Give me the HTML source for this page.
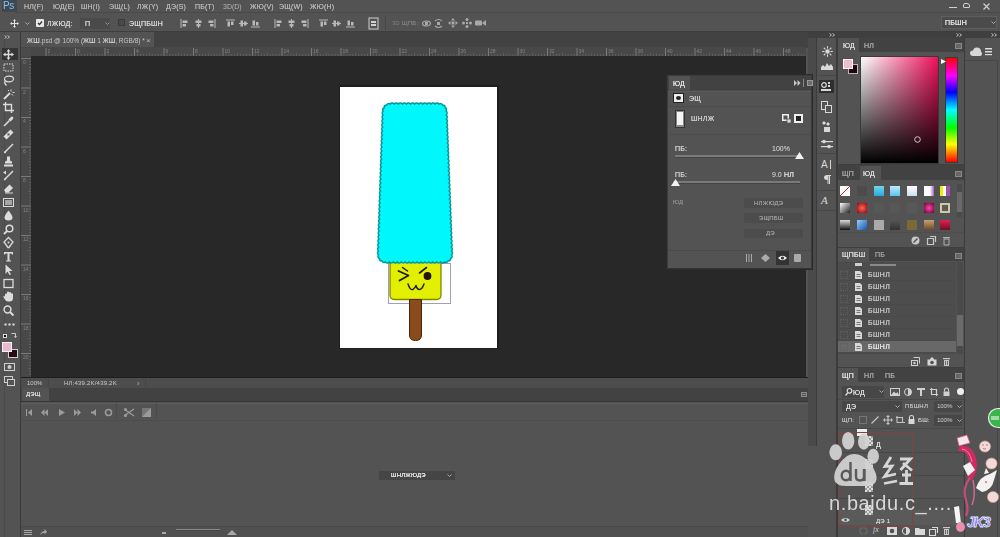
<!DOCTYPE html>
<html><head><meta charset="utf-8">
<style>
*{margin:0;padding:0;box-sizing:border-box}
html,body{width:1000px;height:537px;overflow:hidden;background:#535353;font-family:"Liberation Sans",sans-serif;font-size:8px;color:#ddd;position:relative}
.a{position:absolute}
.t{position:absolute;white-space:nowrap;line-height:1}
.z{font-weight:normal;filter:blur(0.3px);letter-spacing:0.2px;text-shadow:0 0 0.6px currentColor}
svg{position:absolute;overflow:visible}
</style></head><body>

<div class="a" style="left:0px;top:0px;width:1000px;height:13px;background:#535353;"></div>
<div class="a" style="left:0px;top:12px;width:1000px;height:1px;background:#494949;"></div>
<div class="a" style="left:2px;top:0px;width:15px;height:12px;background:#3c4854;"></div>
<div class="t" style="left:3px;top:1px;font-size:10px;color:#8cc0ea;letter-spacing:-0.3px;filter:blur(0.3px)">Ps</div>
<div class="a" style="left:0px;top:12px;width:16px;height:1px;background:#6a5038;"></div>
<div class="t z" style="left:24px;top:3px;font-size:7px;color:#b4b4b4;font-weight:normal">НЛ(F)</div>
<div class="t z" style="left:53px;top:3px;font-size:7px;color:#b4b4b4;font-weight:normal">ЮД(E)</div>
<div class="t z" style="left:81px;top:3px;font-size:7px;color:#b4b4b4;font-weight:normal">ШН(I)</div>
<div class="t z" style="left:109px;top:3px;font-size:7px;color:#b4b4b4;font-weight:normal">ЭЩ(L)</div>
<div class="t z" style="left:137px;top:3px;font-size:7px;color:#b4b4b4;font-weight:normal">ЛЖ(Y)</div>
<div class="t z" style="left:166px;top:3px;font-size:7px;color:#b4b4b4;font-weight:normal">ДЭ(S)</div>
<div class="t z" style="left:195px;top:3px;font-size:7px;color:#b4b4b4;font-weight:normal">ПБ(T)</div>
<div class="t z" style="left:250px;top:3px;font-size:7px;color:#b4b4b4;font-weight:normal">ЖЮ(V)</div>
<div class="t z" style="left:279px;top:3px;font-size:7px;color:#b4b4b4;font-weight:normal">ЭЩ(W)</div>
<div class="t z" style="left:310px;top:3px;font-size:7px;color:#b4b4b4;font-weight:normal">ЖЮ(H)</div>
<div class="t" style="left:223px;top:3px;font-size:7px;color:#b4b4b4;filter:blur(0.35px)">3D(D)</div>
<div class="a" style="left:949px;top:7px;width:8px;height:1px;background:#cfcfcf;"></div>
<div class="a" style="left:963px;top:3px;width:7px;height:5px;background:transparent;border:1px solid #cfcfcf;border-radius:2px 3px 1px 1px"></div>
<svg style="left:983px;top:3px;" width="7" height="7" viewBox="0 0 7 7"><path d="M0.5 0.5L6.5 6.5M6.5 0.5L0.5 6.5" stroke="#d0d0d0" stroke-width="1.2"/></svg>
<div class="a" style="left:0px;top:13px;width:1000px;height:19px;background:#535353;"></div>
<div class="a" style="left:0px;top:31px;width:1000px;height:1px;background:#3e3e3e;"></div>
<svg style="left:10px;top:19px;" width="9" height="9" viewBox="0 0 9 9"><path d="M4.5 0L6 2H5v2h2V3L9 4.5 7 6V5H5v2h1L4.5 9 3 7h1V5H2v1L0 4.5 2 3v1h2V2H3z" fill="#e0e0e0"/></svg>
<svg style="left:25px;top:22px;" width="5" height="3" viewBox="0 0 5 3"><path d="M0.5 0.5L2.5 2.5L4.5 0.5" fill="none" stroke="#aaa" stroke-width="1"/></svg>
<div class="a" style="left:36px;top:19px;width:8px;height:8px;background:#e8e8e8;border-radius:1px"></div>
<svg style="left:37px;top:20px;" width="6" height="6" viewBox="0 0 6 6"><path d="M1 3l1.5 1.5L5 1.5" stroke="#333" stroke-width="1.3" fill="none"/></svg>
<div class="t z" style="left:47px;top:20px;font-size:7px;color:#d6d6d6;">ЛЖЮД<span style="font-weight:normal">:</span></div>
<div class="a" style="left:80px;top:18px;width:30px;height:11px;background:#4a4a4a;"></div>
<div class="t z" style="left:85px;top:20px;font-size:7px;color:#d6d6d6;">П</div>
<svg style="left:105px;top:22px;" width="5" height="3" viewBox="0 0 5 3"><path d="M0.5 0.5L2.5 2.5L4.5 0.5" fill="none" stroke="#999" stroke-width="1"/></svg>
<div class="a" style="left:118px;top:19px;width:7px;height:7px;background:#4a4a4a;border:1px solid #3a3a3a"></div>
<div class="t z" style="left:129px;top:20px;font-size:7px;color:#d6d6d6;">ЭЩПБШН</div>
<svg style="left:180px;top:19px;" width="9" height="9" viewBox="0 0 9 9"><rect x="0.5" y="0" width="1" height="9" fill="#b8b8b8"/><rect x="2.5" y="1.5" width="5" height="2.5" fill="#b8b8b8"/><rect x="2.5" y="5" width="3.5" height="2.5" fill="#b8b8b8"/></svg>
<svg style="left:194px;top:19px;" width="9" height="9" viewBox="0 0 9 9"><rect x="4" y="0" width="1" height="9" fill="#b8b8b8"/><rect x="1.5" y="1.5" width="6" height="2.5" fill="#b8b8b8"/><rect x="2.5" y="5" width="4" height="2.5" fill="#b8b8b8"/></svg>
<svg style="left:207px;top:19px;" width="9" height="9" viewBox="0 0 9 9"><rect x="7.5" y="0" width="1" height="9" fill="#b8b8b8"/><rect x="1.5" y="1.5" width="5" height="2.5" fill="#b8b8b8"/><rect x="3" y="5" width="3.5" height="2.5" fill="#b8b8b8"/></svg>
<svg style="left:226px;top:19px;" width="9" height="9" viewBox="0 0 9 9"><rect x="0" y="0.5" width="9" height="1" fill="#b8b8b8"/><rect x="1.5" y="2.5" width="2.5" height="5" fill="#b8b8b8"/><rect x="5" y="2.5" width="2.5" height="3.5" fill="#b8b8b8"/></svg>
<svg style="left:239px;top:19px;" width="9" height="9" viewBox="0 0 9 9"><rect x="0" y="4" width="9" height="1" fill="#b8b8b8"/><rect x="1.5" y="1.5" width="2.5" height="6" fill="#b8b8b8"/><rect x="5" y="2.5" width="2.5" height="4" fill="#b8b8b8"/></svg>
<svg style="left:251px;top:19px;" width="9" height="9" viewBox="0 0 9 9"><rect x="0" y="7.5" width="9" height="1" fill="#b8b8b8"/><rect x="1.5" y="1.5" width="2.5" height="5" fill="#b8b8b8"/><rect x="5" y="3" width="2.5" height="3.5" fill="#b8b8b8"/></svg>
<svg style="left:274px;top:19px;" width="9" height="9" viewBox="0 0 9 9"><rect x="0.5" y="0" width="1" height="9" fill="#b8b8b8"/><rect x="2.5" y="1.5" width="5" height="2.5" fill="#b8b8b8"/><rect x="2.5" y="5" width="3.5" height="2.5" fill="#b8b8b8"/></svg>
<svg style="left:287px;top:19px;" width="9" height="9" viewBox="0 0 9 9"><rect x="4" y="0" width="1" height="9" fill="#b8b8b8"/><rect x="1.5" y="1.5" width="6" height="2.5" fill="#b8b8b8"/><rect x="2.5" y="5" width="4" height="2.5" fill="#b8b8b8"/></svg>
<svg style="left:300px;top:19px;" width="9" height="9" viewBox="0 0 9 9"><rect x="7.5" y="0" width="1" height="9" fill="#b8b8b8"/><rect x="1.5" y="1.5" width="5" height="2.5" fill="#b8b8b8"/><rect x="3" y="5" width="3.5" height="2.5" fill="#b8b8b8"/></svg>
<svg style="left:319px;top:19px;" width="9" height="9" viewBox="0 0 9 9"><rect x="0" y="0.5" width="9" height="1" fill="#b8b8b8"/><rect x="1.5" y="2.5" width="2.5" height="5" fill="#b8b8b8"/><rect x="5" y="2.5" width="2.5" height="3.5" fill="#b8b8b8"/></svg>
<svg style="left:332px;top:19px;" width="9" height="9" viewBox="0 0 9 9"><rect x="0" y="4" width="9" height="1" fill="#b8b8b8"/><rect x="1.5" y="1.5" width="2.5" height="6" fill="#b8b8b8"/><rect x="5" y="2.5" width="2.5" height="4" fill="#b8b8b8"/></svg>
<svg style="left:346px;top:19px;" width="9" height="9" viewBox="0 0 9 9"><rect x="0" y="7.5" width="9" height="1" fill="#b8b8b8"/><rect x="1.5" y="1.5" width="2.5" height="5" fill="#b8b8b8"/><rect x="5" y="3" width="2.5" height="3.5" fill="#b8b8b8"/></svg>
<svg style="left:369px;top:18px;" width="9" height="11" viewBox="0 0 9 11"><rect x="0" y="0" width="9" height="11" fill="none" stroke="#cfcfcf"/><rect x="2" y="3" width="5" height="2" fill="#cfcfcf"/><rect x="2" y="6" width="5" height="2" fill="#cfcfcf"/></svg>
<div class="a" style="left:385px;top:16px;width:1px;height:14px;background:#474747;"></div>
<div class="t" style="left:392px;top:20px;font-size:6px;color:#7e7e7e;filter:blur(0.3px)">3D</div>
<div class="t z" style="left:402px;top:20px;font-size:6px;color:#7e7e7e;">ЩПБ<span style="font-weight:normal">:</span></div>
<svg style="left:422px;top:19px;" width="9" height="9" viewBox="0 0 9 9"><ellipse cx="4.5" cy="4.5" rx="4" ry="2.5" fill="none" stroke="#a8a8a8" stroke-width="1.2"/><rect x="3" y="3" width="3" height="3" fill="#a8a8a8"/></svg>
<svg style="left:434px;top:19px;" width="9" height="9" viewBox="0 0 9 9"><path d="M1 2Q4.5 -1 8 2M1 7Q4.5 10 8 7" fill="none" stroke="#a8a8a8" stroke-width="1.1"/><rect x="3" y="3" width="3" height="3" fill="#a8a8a8"/></svg>
<svg style="left:448px;top:18px;" width="10" height="10" viewBox="0 0 10 10"><path d="M5 0L7 2.5H3zM5 10L7 7.5H3zM0 5L2.5 3V7zM10 5L7.5 3V7z" fill="#a8a8a8"/><rect x="3.5" y="3.5" width="3" height="3" fill="#a8a8a8"/></svg>
<svg style="left:462px;top:18px;" width="10" height="10" viewBox="0 0 10 10"><circle cx="5" cy="1.5" r="1.5" fill="#a8a8a8"/><circle cx="5" cy="8.5" r="1.5" fill="#a8a8a8"/><circle cx="1.5" cy="5" r="1.5" fill="#a8a8a8"/><circle cx="8.5" cy="5" r="1.5" fill="#a8a8a8"/><rect x="4" y="4" width="2" height="2" fill="#a8a8a8"/></svg>
<svg style="left:475px;top:19px;" width="11" height="8" viewBox="0 0 11 8"><rect x="0" y="1.5" width="7" height="5" rx="1" fill="#a8a8a8"/><path d="M7 4L11 1V7z" fill="#a8a8a8"/></svg>
<div class="a" style="left:941px;top:16px;width:56px;height:13px;background:#4b4b4b;border:1px solid #5e5e5e"></div>
<div class="t z" style="left:945px;top:19px;font-size:7px;color:#e6e6e6;">ПБШН</div>
<svg style="left:991px;top:21px;" width="5" height="3" viewBox="0 0 5 3"><path d="M0.5 0.5L2.5 2.5L4.5 0.5" fill="none" stroke="#aaa" stroke-width="1"/></svg>
<div class="a" style="left:0px;top:32px;width:20px;height:505px;background:#535353;"></div>
<div class="a" style="left:4px;top:32px;width:1px;height:505px;background:#4a4a4a;"></div>
<div class="a" style="left:20px;top:32px;width:1px;height:505px;background:#3a3a3a;"></div>
<svg style="left:4px;top:35px;" width="6" height="4" viewBox="0 0 6 4"><path d="M0.5 0.5L2.5 2L0.5 3.5M3.5 0.5L5.5 2L3.5 3.5" fill="none" stroke="#bbb" stroke-width="1"/></svg>
<div class="a" style="left:2px;top:48px;width:16px;height:12px;background:#343434;"></div>
<svg style="left:3px;top:49px;" width="11" height="11" viewBox="0 0 11 11"><path d="M5.5 0L7.5 2.5H6.2v2.3h2.3V3.5L11 5.5L8.5 7.5V6.2H6.2v2.3h1.3L5.5 11L3.5 8.5h1.3V6.2H2.5v1.3L0 5.5L2.5 3.5v1.3h2.3V2.5H3.5z" fill="#dcdcdc"/></svg>
<svg style="left:3px;top:62px;" width="11" height="11" viewBox="0 0 11 11"><rect x="1" y="2" width="9" height="7" fill="none" stroke="#dcdcdc" stroke-dasharray="1.5 1"/></svg>
<svg style="left:3px;top:75px;" width="11" height="11" viewBox="0 0 11 11"><ellipse cx="6" cy="4" rx="4.5" ry="2.8" fill="none" stroke="#dcdcdc" stroke-width="1.2"/><path d="M2 6Q1 9 3.5 10.5" fill="none" stroke="#dcdcdc" stroke-width="1.2"/></svg>
<svg style="left:3px;top:89px;" width="11" height="11" viewBox="0 0 11 11"><path d="M1 10L7 4" stroke="#dcdcdc" stroke-width="1.8"/><path d="M8 0.5V2.5M9.5 3.5H11.5M8.5 5L10 6.5M6 2L5 1" stroke="#dcdcdc" stroke-width="1"/></svg>
<svg style="left:3px;top:102px;" width="11" height="11" viewBox="0 0 11 11"><path d="M2.5 0V8.5H11M0 2.5H8.5V11" fill="none" stroke="#dcdcdc" stroke-width="1.4"/></svg>
<svg style="left:3px;top:116px;" width="11" height="11" viewBox="0 0 11 11"><path d="M1 10L6.5 4.5" stroke="#dcdcdc" stroke-width="1.6"/><path d="M5.5 3.5L7.5 1.5Q9 0 10 1Q11 2 9.5 3.5L7.5 5.5z" fill="#dcdcdc"/></svg>
<svg style="left:3px;top:129px;" width="11" height="11" viewBox="0 0 11 11"><path d="M0.5 7.5L7.5 0.5L10.5 3.5L3.5 10.5z" fill="#dcdcdc"/><rect x="4.5" y="4.5" width="2" height="2" fill="#535353"/></svg>
<svg style="left:3px;top:143px;" width="11" height="11" viewBox="0 0 11 11"><path d="M1 10.5Q0.5 8 2.5 7.5L9.5 0.5L10.5 1.5L3.5 8.5Q3 10.5 1 10.5z" fill="#dcdcdc"/></svg>
<svg style="left:3px;top:156px;" width="11" height="11" viewBox="0 0 11 11"><path d="M4 0.5H7V4Q7 5 9 5.5V7.5H2V5.5Q4 5 4 4z" fill="#dcdcdc"/><rect x="1" y="8.5" width="9" height="2" fill="#dcdcdc"/></svg>
<svg style="left:3px;top:170px;" width="11" height="11" viewBox="0 0 11 11"><path d="M1 10.5Q0.5 8 2.5 7.5L9.5 0.5L10.5 1.5L3.5 8.5Q3 10.5 1 10.5z" fill="#dcdcdc"/><path d="M0 2.5L3 0.5V4.5z" fill="#dcdcdc"/></svg>
<svg style="left:3px;top:183px;" width="11" height="11" viewBox="0 0 11 11"><path d="M1 7L6.5 1.5L10 5L5.5 9.5H2.5z" fill="#dcdcdc"/><rect x="2" y="9.5" width="8" height="1" fill="#dcdcdc"/></svg>
<svg style="left:3px;top:197px;" width="11" height="11" viewBox="0 0 11 11"><rect x="0.5" y="1.5" width="10" height="8" fill="none" stroke="#dcdcdc"/><rect x="2" y="3" width="7" height="5" fill="#dcdcdc" opacity=".6"/></svg>
<svg style="left:3px;top:210px;" width="11" height="11" viewBox="0 0 11 11"><path d="M5.5 0.5Q9.5 5.5 9.5 7.5Q9.5 10.5 5.5 10.5Q1.5 10.5 1.5 7.5Q1.5 5.5 5.5 0.5z" fill="#dcdcdc"/></svg>
<svg style="left:3px;top:224px;" width="11" height="11" viewBox="0 0 11 11"><circle cx="6.5" cy="4.5" r="3.3" fill="none" stroke="#dcdcdc" stroke-width="1.5"/><path d="M4 7L1 10" stroke="#dcdcdc" stroke-width="1.8"/></svg>
<svg style="left:3px;top:237px;" width="11" height="11" viewBox="0 0 11 11"><path d="M5.5 0.5L10 5L6 10.5H5L1 5z" fill="none" stroke="#dcdcdc" stroke-width="1.3"/><circle cx="5.5" cy="5.5" r="1" fill="#dcdcdc"/></svg>
<svg style="left:3px;top:251px;" width="11" height="11" viewBox="0 0 11 11"><path d="M1 1H10V3.5H9L8.5 2.5H6.5V9.5H8V10.5H3V9.5H4.5V2.5H2.5L2 3.5H1z" fill="#dcdcdc"/></svg>
<svg style="left:3px;top:264px;" width="11" height="11" viewBox="0 0 11 11"><path d="M2.5 0.5L9.5 7H6L8 10.5L6.5 11L4.5 7.5L2.5 10z" fill="#dcdcdc"/></svg>
<svg style="left:3px;top:278px;" width="11" height="11" viewBox="0 0 11 11"><rect x="1" y="1.5" width="9" height="8" fill="none" stroke="#dcdcdc" stroke-width="1.3"/></svg>
<svg style="left:3px;top:291px;" width="11" height="11" viewBox="0 0 11 11"><path d="M2 6V3.5Q2 2.5 3 2.5Q4 2.5 4 3.5V1.5Q4 0.5 5 0.5Q6 0.5 6 1.5V2Q6 1 7 1Q8 1 8 2V3Q8 2.2 9 2.2Q10 2.2 10 3.2V7Q10 10.5 6.5 10.5H5Q3 10.5 1.5 8L0.5 6Q0.2 5 1 4.8Q1.8 4.7 2 6z" fill="#dcdcdc"/></svg>
<svg style="left:3px;top:305px;" width="11" height="11" viewBox="0 0 11 11"><circle cx="4.5" cy="4.5" r="3.4" fill="none" stroke="#dcdcdc" stroke-width="1.5"/><path d="M7 7L10.5 10.5" stroke="#dcdcdc" stroke-width="2"/></svg>
<svg style="left:4px;top:323px;" width="11" height="3" viewBox="0 0 11 3"><circle cx="1.5" cy="1.5" r="1.2" fill="#d0d0d0"/><circle cx="5.5" cy="1.5" r="1.2" fill="#d0d0d0"/><circle cx="9.5" cy="1.5" r="1.2" fill="#d0d0d0"/></svg>
<div class="a" style="left:3px;top:334px;width:4px;height:4px;background:#111;border:1px solid #ddd"></div>
<svg style="left:11px;top:332px;" width="6" height="6" viewBox="0 0 6 6"><path d="M0.5 1.5H4.5V5.5" fill="none" stroke="#ccc" stroke-width="1"/><path d="M3 4L4.5 6L6 4z" fill="#ccc"/></svg>
<div class="a" style="left:8px;top:349px;width:10px;height:9px;background:#2a0814;border:1px solid #cfcfcf"></div>
<div class="a" style="left:2px;top:342px;width:10px;height:10px;background:#eab9cf;border:1px solid #f4f4f4"></div>
<svg style="left:4px;top:363px;" width="11" height="8" viewBox="0 0 11 8"><rect x="0.5" y="0.5" width="10" height="7" fill="none" stroke="#cfcfcf"/><circle cx="5.5" cy="4" r="2" fill="#cfcfcf"/></svg>
<svg style="left:4px;top:376px;" width="11" height="10" viewBox="0 0 11 10"><rect x="0.5" y="0.5" width="8" height="6" fill="none" stroke="#cfcfcf"/><rect x="3.5" y="3.5" width="7" height="6" fill="#535353" stroke="#cfcfcf"/></svg>
<div class="a" style="left:21px;top:32px;width:787px;height:16px;background:#424242;"></div>
<div class="a" style="left:21px;top:32px;width:133px;height:16px;background:#535353;"></div>
<div class="t" style="left:27px;top:38px;font-size:6.5px;color:#c8c8c8;filter:blur(0.3px)"><b style="letter-spacing:.3px">ЖШ</b>.psd @ 100% (<b>ЖШ</b> 1 <b>ЖШ</b>, RGB/8) *</div>
<div class="t" style="left:146px;top:37px;font-size:8px;color:#bbb;">&#x00D7;</div>
<div class="a" style="left:21px;top:47px;width:785px;height:9px;background:#484848;"></div>
<div class="a" style="left:21px;top:47px;width:10px;height:330px;background:#484848;"></div>
<div class="a" style="left:21px;top:48px;width:10px;height:8px;background:#4b4b4b;"></div>
<svg style="left:21px;top:48px;" width="787" height="8" viewBox="0 0 787 8"><rect x="24.5" y="0" width="1" height="8" fill="#7a7a7a"/><rect x="27.4" y="6" width="1" height="2" fill="#626262"/><rect x="30.4" y="6" width="1" height="2" fill="#626262"/><rect x="33.4" y="6" width="1" height="2" fill="#626262"/><rect x="36.3" y="6" width="1" height="2" fill="#626262"/><rect x="39.2" y="5" width="1" height="3" fill="#626262"/><rect x="42.2" y="6" width="1" height="2" fill="#626262"/><rect x="45.1" y="6" width="1" height="2" fill="#626262"/><rect x="48.1" y="6" width="1" height="2" fill="#626262"/><rect x="51.0" y="6" width="1" height="2" fill="#626262"/><rect x="54.0" y="0" width="1" height="8" fill="#7a7a7a"/><rect x="57.0" y="6" width="1" height="2" fill="#626262"/><rect x="59.9" y="6" width="1" height="2" fill="#626262"/><rect x="62.9" y="6" width="1" height="2" fill="#626262"/><rect x="65.8" y="6" width="1" height="2" fill="#626262"/><rect x="68.8" y="5" width="1" height="3" fill="#626262"/><rect x="71.7" y="6" width="1" height="2" fill="#626262"/><rect x="74.7" y="6" width="1" height="2" fill="#626262"/><rect x="77.6" y="6" width="1" height="2" fill="#626262"/><rect x="80.5" y="6" width="1" height="2" fill="#626262"/><rect x="83.5" y="0" width="1" height="8" fill="#7a7a7a"/><rect x="86.5" y="6" width="1" height="2" fill="#626262"/><rect x="89.4" y="6" width="1" height="2" fill="#626262"/><rect x="92.3" y="6" width="1" height="2" fill="#626262"/><rect x="95.3" y="6" width="1" height="2" fill="#626262"/><rect x="98.2" y="5" width="1" height="3" fill="#626262"/><rect x="101.2" y="6" width="1" height="2" fill="#626262"/><rect x="104.2" y="6" width="1" height="2" fill="#626262"/><rect x="107.1" y="6" width="1" height="2" fill="#626262"/><rect x="110.0" y="6" width="1" height="2" fill="#626262"/><rect x="113.0" y="0" width="1" height="8" fill="#7a7a7a"/><rect x="116.0" y="6" width="1" height="2" fill="#626262"/><rect x="118.9" y="6" width="1" height="2" fill="#626262"/><rect x="121.8" y="6" width="1" height="2" fill="#626262"/><rect x="124.8" y="6" width="1" height="2" fill="#626262"/><rect x="127.8" y="5" width="1" height="3" fill="#626262"/><rect x="130.7" y="6" width="1" height="2" fill="#626262"/><rect x="133.7" y="6" width="1" height="2" fill="#626262"/><rect x="136.6" y="6" width="1" height="2" fill="#626262"/><rect x="139.6" y="6" width="1" height="2" fill="#626262"/><rect x="142.5" y="0" width="1" height="8" fill="#7a7a7a"/><rect x="145.4" y="6" width="1" height="2" fill="#626262"/><rect x="148.4" y="6" width="1" height="2" fill="#626262"/><rect x="151.3" y="6" width="1" height="2" fill="#626262"/><rect x="154.3" y="6" width="1" height="2" fill="#626262"/><rect x="157.2" y="5" width="1" height="3" fill="#626262"/><rect x="160.2" y="6" width="1" height="2" fill="#626262"/><rect x="163.2" y="6" width="1" height="2" fill="#626262"/><rect x="166.1" y="6" width="1" height="2" fill="#626262"/><rect x="169.1" y="6" width="1" height="2" fill="#626262"/><rect x="172.0" y="0" width="1" height="8" fill="#7a7a7a"/><rect x="174.9" y="6" width="1" height="2" fill="#626262"/><rect x="177.9" y="6" width="1" height="2" fill="#626262"/><rect x="180.8" y="6" width="1" height="2" fill="#626262"/><rect x="183.8" y="6" width="1" height="2" fill="#626262"/><rect x="186.8" y="5" width="1" height="3" fill="#626262"/><rect x="189.7" y="6" width="1" height="2" fill="#626262"/><rect x="192.7" y="6" width="1" height="2" fill="#626262"/><rect x="195.6" y="6" width="1" height="2" fill="#626262"/><rect x="198.6" y="6" width="1" height="2" fill="#626262"/><rect x="201.5" y="0" width="1" height="8" fill="#7a7a7a"/><rect x="204.4" y="6" width="1" height="2" fill="#626262"/><rect x="207.4" y="6" width="1" height="2" fill="#626262"/><rect x="210.3" y="6" width="1" height="2" fill="#626262"/><rect x="213.3" y="6" width="1" height="2" fill="#626262"/><rect x="216.2" y="5" width="1" height="3" fill="#626262"/><rect x="219.2" y="6" width="1" height="2" fill="#626262"/><rect x="222.2" y="6" width="1" height="2" fill="#626262"/><rect x="225.1" y="6" width="1" height="2" fill="#626262"/><rect x="228.1" y="6" width="1" height="2" fill="#626262"/><rect x="231.0" y="0" width="1" height="8" fill="#7a7a7a"/><rect x="233.9" y="6" width="1" height="2" fill="#626262"/><rect x="236.9" y="6" width="1" height="2" fill="#626262"/><rect x="239.8" y="6" width="1" height="2" fill="#626262"/><rect x="242.8" y="6" width="1" height="2" fill="#626262"/><rect x="245.8" y="5" width="1" height="3" fill="#626262"/><rect x="248.7" y="6" width="1" height="2" fill="#626262"/><rect x="251.7" y="6" width="1" height="2" fill="#626262"/><rect x="254.6" y="6" width="1" height="2" fill="#626262"/><rect x="257.6" y="6" width="1" height="2" fill="#626262"/><rect x="260.5" y="0" width="1" height="8" fill="#7a7a7a"/><rect x="263.4" y="6" width="1" height="2" fill="#626262"/><rect x="266.4" y="6" width="1" height="2" fill="#626262"/><rect x="269.4" y="6" width="1" height="2" fill="#626262"/><rect x="272.3" y="6" width="1" height="2" fill="#626262"/><rect x="275.2" y="5" width="1" height="3" fill="#626262"/><rect x="278.2" y="6" width="1" height="2" fill="#626262"/><rect x="281.1" y="6" width="1" height="2" fill="#626262"/><rect x="284.1" y="6" width="1" height="2" fill="#626262"/><rect x="287.1" y="6" width="1" height="2" fill="#626262"/><rect x="290.0" y="0" width="1" height="8" fill="#7a7a7a"/><rect x="292.9" y="6" width="1" height="2" fill="#626262"/><rect x="295.9" y="6" width="1" height="2" fill="#626262"/><rect x="298.9" y="6" width="1" height="2" fill="#626262"/><rect x="301.8" y="6" width="1" height="2" fill="#626262"/><rect x="304.8" y="5" width="1" height="3" fill="#626262"/><rect x="307.7" y="6" width="1" height="2" fill="#626262"/><rect x="310.6" y="6" width="1" height="2" fill="#626262"/><rect x="313.6" y="6" width="1" height="2" fill="#626262"/><rect x="316.6" y="6" width="1" height="2" fill="#626262"/><rect x="319.5" y="0" width="1" height="8" fill="#7a7a7a"/><rect x="322.4" y="6" width="1" height="2" fill="#626262"/><rect x="325.4" y="6" width="1" height="2" fill="#626262"/><rect x="328.4" y="6" width="1" height="2" fill="#626262"/><rect x="331.3" y="6" width="1" height="2" fill="#626262"/><rect x="334.2" y="5" width="1" height="3" fill="#626262"/><rect x="337.2" y="6" width="1" height="2" fill="#626262"/><rect x="340.1" y="6" width="1" height="2" fill="#626262"/><rect x="343.1" y="6" width="1" height="2" fill="#626262"/><rect x="346.1" y="6" width="1" height="2" fill="#626262"/><rect x="349.0" y="0" width="1" height="8" fill="#7a7a7a"/><rect x="351.9" y="6" width="1" height="2" fill="#626262"/><rect x="354.9" y="6" width="1" height="2" fill="#626262"/><rect x="357.9" y="6" width="1" height="2" fill="#626262"/><rect x="360.8" y="6" width="1" height="2" fill="#626262"/><rect x="363.8" y="5" width="1" height="3" fill="#626262"/><rect x="366.7" y="6" width="1" height="2" fill="#626262"/><rect x="369.6" y="6" width="1" height="2" fill="#626262"/><rect x="372.6" y="6" width="1" height="2" fill="#626262"/><rect x="375.6" y="6" width="1" height="2" fill="#626262"/><rect x="378.5" y="0" width="1" height="8" fill="#7a7a7a"/><rect x="381.4" y="6" width="1" height="2" fill="#626262"/><rect x="384.4" y="6" width="1" height="2" fill="#626262"/><rect x="387.4" y="6" width="1" height="2" fill="#626262"/><rect x="390.3" y="6" width="1" height="2" fill="#626262"/><rect x="393.2" y="5" width="1" height="3" fill="#626262"/><rect x="396.2" y="6" width="1" height="2" fill="#626262"/><rect x="399.1" y="6" width="1" height="2" fill="#626262"/><rect x="402.1" y="6" width="1" height="2" fill="#626262"/><rect x="405.1" y="6" width="1" height="2" fill="#626262"/><rect x="408.0" y="0" width="1" height="8" fill="#7a7a7a"/><rect x="410.9" y="6" width="1" height="2" fill="#626262"/><rect x="413.9" y="6" width="1" height="2" fill="#626262"/><rect x="416.9" y="6" width="1" height="2" fill="#626262"/><rect x="419.8" y="6" width="1" height="2" fill="#626262"/><rect x="422.8" y="5" width="1" height="3" fill="#626262"/><rect x="425.7" y="6" width="1" height="2" fill="#626262"/><rect x="428.6" y="6" width="1" height="2" fill="#626262"/><rect x="431.6" y="6" width="1" height="2" fill="#626262"/><rect x="434.6" y="6" width="1" height="2" fill="#626262"/><rect x="437.5" y="0" width="1" height="8" fill="#7a7a7a"/><rect x="440.4" y="6" width="1" height="2" fill="#626262"/><rect x="443.4" y="6" width="1" height="2" fill="#626262"/><rect x="446.4" y="6" width="1" height="2" fill="#626262"/><rect x="449.3" y="6" width="1" height="2" fill="#626262"/><rect x="452.2" y="5" width="1" height="3" fill="#626262"/><rect x="455.2" y="6" width="1" height="2" fill="#626262"/><rect x="458.1" y="6" width="1" height="2" fill="#626262"/><rect x="461.1" y="6" width="1" height="2" fill="#626262"/><rect x="464.1" y="6" width="1" height="2" fill="#626262"/><rect x="467.0" y="0" width="1" height="8" fill="#7a7a7a"/><rect x="469.9" y="6" width="1" height="2" fill="#626262"/><rect x="472.9" y="6" width="1" height="2" fill="#626262"/><rect x="475.9" y="6" width="1" height="2" fill="#626262"/><rect x="478.8" y="6" width="1" height="2" fill="#626262"/><rect x="481.8" y="5" width="1" height="3" fill="#626262"/><rect x="484.7" y="6" width="1" height="2" fill="#626262"/><rect x="487.6" y="6" width="1" height="2" fill="#626262"/><rect x="490.6" y="6" width="1" height="2" fill="#626262"/><rect x="493.6" y="6" width="1" height="2" fill="#626262"/><rect x="496.5" y="0" width="1" height="8" fill="#7a7a7a"/><rect x="499.4" y="6" width="1" height="2" fill="#626262"/><rect x="502.4" y="6" width="1" height="2" fill="#626262"/><rect x="505.4" y="6" width="1" height="2" fill="#626262"/><rect x="508.3" y="6" width="1" height="2" fill="#626262"/><rect x="511.2" y="5" width="1" height="3" fill="#626262"/><rect x="514.2" y="6" width="1" height="2" fill="#626262"/><rect x="517.1" y="6" width="1" height="2" fill="#626262"/><rect x="520.1" y="6" width="1" height="2" fill="#626262"/><rect x="523.0" y="6" width="1" height="2" fill="#626262"/><rect x="526.0" y="0" width="1" height="8" fill="#7a7a7a"/><rect x="529.0" y="6" width="1" height="2" fill="#626262"/><rect x="531.9" y="6" width="1" height="2" fill="#626262"/><rect x="534.9" y="6" width="1" height="2" fill="#626262"/><rect x="537.8" y="6" width="1" height="2" fill="#626262"/><rect x="540.8" y="5" width="1" height="3" fill="#626262"/><rect x="543.7" y="6" width="1" height="2" fill="#626262"/><rect x="546.6" y="6" width="1" height="2" fill="#626262"/><rect x="549.6" y="6" width="1" height="2" fill="#626262"/><rect x="552.5" y="6" width="1" height="2" fill="#626262"/><rect x="555.5" y="0" width="1" height="8" fill="#7a7a7a"/><rect x="558.5" y="6" width="1" height="2" fill="#626262"/><rect x="561.4" y="6" width="1" height="2" fill="#626262"/><rect x="564.4" y="6" width="1" height="2" fill="#626262"/><rect x="567.3" y="6" width="1" height="2" fill="#626262"/><rect x="570.2" y="5" width="1" height="3" fill="#626262"/><rect x="573.2" y="6" width="1" height="2" fill="#626262"/><rect x="576.1" y="6" width="1" height="2" fill="#626262"/><rect x="579.1" y="6" width="1" height="2" fill="#626262"/><rect x="582.0" y="6" width="1" height="2" fill="#626262"/><rect x="585.0" y="0" width="1" height="8" fill="#7a7a7a"/><rect x="588.0" y="6" width="1" height="2" fill="#626262"/><rect x="590.9" y="6" width="1" height="2" fill="#626262"/><rect x="593.9" y="6" width="1" height="2" fill="#626262"/><rect x="596.8" y="6" width="1" height="2" fill="#626262"/><rect x="599.8" y="5" width="1" height="3" fill="#626262"/><rect x="602.7" y="6" width="1" height="2" fill="#626262"/><rect x="605.6" y="6" width="1" height="2" fill="#626262"/><rect x="608.6" y="6" width="1" height="2" fill="#626262"/><rect x="611.5" y="6" width="1" height="2" fill="#626262"/><rect x="614.5" y="0" width="1" height="8" fill="#7a7a7a"/><rect x="617.5" y="6" width="1" height="2" fill="#626262"/><rect x="620.4" y="6" width="1" height="2" fill="#626262"/><rect x="623.4" y="6" width="1" height="2" fill="#626262"/><rect x="626.3" y="6" width="1" height="2" fill="#626262"/><rect x="629.2" y="5" width="1" height="3" fill="#626262"/><rect x="632.2" y="6" width="1" height="2" fill="#626262"/><rect x="635.1" y="6" width="1" height="2" fill="#626262"/><rect x="638.1" y="6" width="1" height="2" fill="#626262"/><rect x="641.0" y="6" width="1" height="2" fill="#626262"/><rect x="644.0" y="0" width="1" height="8" fill="#7a7a7a"/><rect x="647.0" y="6" width="1" height="2" fill="#626262"/><rect x="649.9" y="6" width="1" height="2" fill="#626262"/><rect x="652.9" y="6" width="1" height="2" fill="#626262"/><rect x="655.8" y="6" width="1" height="2" fill="#626262"/><rect x="658.8" y="5" width="1" height="3" fill="#626262"/><rect x="661.7" y="6" width="1" height="2" fill="#626262"/><rect x="664.6" y="6" width="1" height="2" fill="#626262"/><rect x="667.6" y="6" width="1" height="2" fill="#626262"/><rect x="670.5" y="6" width="1" height="2" fill="#626262"/><rect x="673.5" y="0" width="1" height="8" fill="#7a7a7a"/><rect x="676.5" y="6" width="1" height="2" fill="#626262"/><rect x="679.4" y="6" width="1" height="2" fill="#626262"/><rect x="682.4" y="6" width="1" height="2" fill="#626262"/><rect x="685.3" y="6" width="1" height="2" fill="#626262"/><rect x="688.2" y="5" width="1" height="3" fill="#626262"/><rect x="691.2" y="6" width="1" height="2" fill="#626262"/><rect x="694.1" y="6" width="1" height="2" fill="#626262"/><rect x="697.1" y="6" width="1" height="2" fill="#626262"/><rect x="700.0" y="6" width="1" height="2" fill="#626262"/><rect x="703.0" y="0" width="1" height="8" fill="#7a7a7a"/><rect x="706.0" y="6" width="1" height="2" fill="#626262"/><rect x="708.9" y="6" width="1" height="2" fill="#626262"/><rect x="711.9" y="6" width="1" height="2" fill="#626262"/><rect x="714.8" y="6" width="1" height="2" fill="#626262"/><rect x="717.8" y="5" width="1" height="3" fill="#626262"/><rect x="720.7" y="6" width="1" height="2" fill="#626262"/><rect x="723.6" y="6" width="1" height="2" fill="#626262"/><rect x="726.6" y="6" width="1" height="2" fill="#626262"/><rect x="729.5" y="6" width="1" height="2" fill="#626262"/><rect x="732.5" y="0" width="1" height="8" fill="#7a7a7a"/><rect x="735.5" y="6" width="1" height="2" fill="#626262"/><rect x="738.4" y="6" width="1" height="2" fill="#626262"/><rect x="741.4" y="6" width="1" height="2" fill="#626262"/><rect x="744.3" y="6" width="1" height="2" fill="#626262"/><rect x="747.2" y="5" width="1" height="3" fill="#626262"/><rect x="750.2" y="6" width="1" height="2" fill="#626262"/><rect x="753.1" y="6" width="1" height="2" fill="#626262"/><rect x="756.1" y="6" width="1" height="2" fill="#626262"/><rect x="759.0" y="6" width="1" height="2" fill="#626262"/><rect x="762.0" y="0" width="1" height="8" fill="#7a7a7a"/><rect x="765.0" y="6" width="1" height="2" fill="#626262"/><rect x="767.9" y="6" width="1" height="2" fill="#626262"/><rect x="770.9" y="6" width="1" height="2" fill="#626262"/><rect x="773.8" y="6" width="1" height="2" fill="#626262"/><rect x="776.8" y="5" width="1" height="3" fill="#626262"/><rect x="779.7" y="6" width="1" height="2" fill="#626262"/><rect x="782.6" y="6" width="1" height="2" fill="#626262"/></svg>
<div class="t" style="left:47.5px;top:49px;font-size:5px;color:#858585;filter:blur(0.35px)">2</div>
<div class="t" style="left:77.0px;top:49px;font-size:5px;color:#858585;filter:blur(0.35px)">0</div>
<div class="t" style="left:106.5px;top:49px;font-size:5px;color:#858585;filter:blur(0.35px)">2</div>
<div class="t" style="left:136.0px;top:49px;font-size:5px;color:#858585;filter:blur(0.35px)">4</div>
<div class="t" style="left:165.5px;top:49px;font-size:5px;color:#858585;filter:blur(0.35px)">6</div>
<div class="t" style="left:195.0px;top:49px;font-size:5px;color:#858585;filter:blur(0.35px)">8</div>
<div class="t" style="left:224.5px;top:49px;font-size:5px;color:#858585;filter:blur(0.35px)">10</div>
<div class="t" style="left:254.0px;top:49px;font-size:5px;color:#858585;filter:blur(0.35px)">12</div>
<div class="t" style="left:283.5px;top:49px;font-size:5px;color:#858585;filter:blur(0.35px)">14</div>
<div class="t" style="left:313.0px;top:49px;font-size:5px;color:#858585;filter:blur(0.35px)">16</div>
<div class="t" style="left:342.5px;top:49px;font-size:5px;color:#858585;filter:blur(0.35px)">18</div>
<div class="t" style="left:372.0px;top:49px;font-size:5px;color:#858585;filter:blur(0.35px)">20</div>
<div class="t" style="left:401.5px;top:49px;font-size:5px;color:#858585;filter:blur(0.35px)">22</div>
<div class="t" style="left:431.0px;top:49px;font-size:5px;color:#858585;filter:blur(0.35px)">24</div>
<div class="t" style="left:460.5px;top:49px;font-size:5px;color:#858585;filter:blur(0.35px)">26</div>
<div class="t" style="left:490.0px;top:49px;font-size:5px;color:#858585;filter:blur(0.35px)">28</div>
<div class="t" style="left:519.5px;top:49px;font-size:5px;color:#858585;filter:blur(0.35px)">30</div>
<div class="t" style="left:549.0px;top:49px;font-size:5px;color:#858585;filter:blur(0.35px)">32</div>
<div class="t" style="left:578.5px;top:49px;font-size:5px;color:#858585;filter:blur(0.35px)">34</div>
<div class="t" style="left:608.0px;top:49px;font-size:5px;color:#858585;filter:blur(0.35px)">36</div>
<div class="t" style="left:637.5px;top:49px;font-size:5px;color:#858585;filter:blur(0.35px)">38</div>
<div class="t" style="left:667.0px;top:49px;font-size:5px;color:#858585;filter:blur(0.35px)">40</div>
<div class="t" style="left:696.5px;top:49px;font-size:5px;color:#858585;filter:blur(0.35px)">42</div>
<div class="t" style="left:726.0px;top:49px;font-size:5px;color:#858585;filter:blur(0.35px)">44</div>
<div class="t" style="left:755.5px;top:49px;font-size:5px;color:#858585;filter:blur(0.35px)">46</div>
<div class="t" style="left:785.0px;top:49px;font-size:5px;color:#858585;filter:blur(0.35px)">48</div>
<svg style="left:21px;top:48px;" width="10" height="330" viewBox="0 0 10 330"><rect x="0" y="10.0" width="10" height="1" fill="#7a7a7a"/><rect x="8" y="12.9" width="2" height="1" fill="#626262"/><rect x="8" y="15.9" width="2" height="1" fill="#626262"/><rect x="8" y="18.9" width="2" height="1" fill="#626262"/><rect x="8" y="21.8" width="2" height="1" fill="#626262"/><rect x="7" y="24.8" width="3" height="1" fill="#626262"/><rect x="8" y="27.7" width="2" height="1" fill="#626262"/><rect x="8" y="30.6" width="2" height="1" fill="#626262"/><rect x="8" y="33.6" width="2" height="1" fill="#626262"/><rect x="8" y="36.5" width="2" height="1" fill="#626262"/><rect x="0" y="39.5" width="10" height="1" fill="#7a7a7a"/><rect x="8" y="42.5" width="2" height="1" fill="#626262"/><rect x="8" y="45.4" width="2" height="1" fill="#626262"/><rect x="8" y="48.4" width="2" height="1" fill="#626262"/><rect x="8" y="51.3" width="2" height="1" fill="#626262"/><rect x="7" y="54.2" width="3" height="1" fill="#626262"/><rect x="8" y="57.2" width="2" height="1" fill="#626262"/><rect x="8" y="60.1" width="2" height="1" fill="#626262"/><rect x="8" y="63.1" width="2" height="1" fill="#626262"/><rect x="8" y="66.0" width="2" height="1" fill="#626262"/><rect x="0" y="69.0" width="10" height="1" fill="#7a7a7a"/><rect x="8" y="72.0" width="2" height="1" fill="#626262"/><rect x="8" y="74.9" width="2" height="1" fill="#626262"/><rect x="8" y="77.8" width="2" height="1" fill="#626262"/><rect x="8" y="80.8" width="2" height="1" fill="#626262"/><rect x="7" y="83.8" width="3" height="1" fill="#626262"/><rect x="8" y="86.7" width="2" height="1" fill="#626262"/><rect x="8" y="89.7" width="2" height="1" fill="#626262"/><rect x="8" y="92.6" width="2" height="1" fill="#626262"/><rect x="8" y="95.5" width="2" height="1" fill="#626262"/><rect x="0" y="98.5" width="10" height="1" fill="#7a7a7a"/><rect x="8" y="101.5" width="2" height="1" fill="#626262"/><rect x="8" y="104.4" width="2" height="1" fill="#626262"/><rect x="8" y="107.3" width="2" height="1" fill="#626262"/><rect x="8" y="110.3" width="2" height="1" fill="#626262"/><rect x="7" y="113.2" width="3" height="1" fill="#626262"/><rect x="8" y="116.2" width="2" height="1" fill="#626262"/><rect x="8" y="119.2" width="2" height="1" fill="#626262"/><rect x="8" y="122.1" width="2" height="1" fill="#626262"/><rect x="8" y="125.0" width="2" height="1" fill="#626262"/><rect x="0" y="128.0" width="10" height="1" fill="#7a7a7a"/><rect x="8" y="130.9" width="2" height="1" fill="#626262"/><rect x="8" y="133.9" width="2" height="1" fill="#626262"/><rect x="8" y="136.8" width="2" height="1" fill="#626262"/><rect x="8" y="139.8" width="2" height="1" fill="#626262"/><rect x="7" y="142.8" width="3" height="1" fill="#626262"/><rect x="8" y="145.7" width="2" height="1" fill="#626262"/><rect x="8" y="148.7" width="2" height="1" fill="#626262"/><rect x="8" y="151.6" width="2" height="1" fill="#626262"/><rect x="8" y="154.6" width="2" height="1" fill="#626262"/><rect x="0" y="157.5" width="10" height="1" fill="#7a7a7a"/><rect x="8" y="160.4" width="2" height="1" fill="#626262"/><rect x="8" y="163.4" width="2" height="1" fill="#626262"/><rect x="8" y="166.3" width="2" height="1" fill="#626262"/><rect x="8" y="169.3" width="2" height="1" fill="#626262"/><rect x="7" y="172.2" width="3" height="1" fill="#626262"/><rect x="8" y="175.2" width="2" height="1" fill="#626262"/><rect x="8" y="178.2" width="2" height="1" fill="#626262"/><rect x="8" y="181.1" width="2" height="1" fill="#626262"/><rect x="8" y="184.1" width="2" height="1" fill="#626262"/><rect x="0" y="187.0" width="10" height="1" fill="#7a7a7a"/><rect x="8" y="189.9" width="2" height="1" fill="#626262"/><rect x="8" y="192.9" width="2" height="1" fill="#626262"/><rect x="8" y="195.8" width="2" height="1" fill="#626262"/><rect x="8" y="198.8" width="2" height="1" fill="#626262"/><rect x="7" y="201.8" width="3" height="1" fill="#626262"/><rect x="8" y="204.7" width="2" height="1" fill="#626262"/><rect x="8" y="207.7" width="2" height="1" fill="#626262"/><rect x="8" y="210.6" width="2" height="1" fill="#626262"/><rect x="8" y="213.6" width="2" height="1" fill="#626262"/><rect x="0" y="216.5" width="10" height="1" fill="#7a7a7a"/><rect x="8" y="219.4" width="2" height="1" fill="#626262"/><rect x="8" y="222.4" width="2" height="1" fill="#626262"/><rect x="8" y="225.3" width="2" height="1" fill="#626262"/><rect x="8" y="228.3" width="2" height="1" fill="#626262"/><rect x="7" y="231.2" width="3" height="1" fill="#626262"/><rect x="8" y="234.2" width="2" height="1" fill="#626262"/><rect x="8" y="237.2" width="2" height="1" fill="#626262"/><rect x="8" y="240.1" width="2" height="1" fill="#626262"/><rect x="8" y="243.1" width="2" height="1" fill="#626262"/><rect x="0" y="246.0" width="10" height="1" fill="#7a7a7a"/><rect x="8" y="248.9" width="2" height="1" fill="#626262"/><rect x="8" y="251.9" width="2" height="1" fill="#626262"/><rect x="8" y="254.8" width="2" height="1" fill="#626262"/><rect x="8" y="257.8" width="2" height="1" fill="#626262"/><rect x="7" y="260.8" width="3" height="1" fill="#626262"/><rect x="8" y="263.7" width="2" height="1" fill="#626262"/><rect x="8" y="266.6" width="2" height="1" fill="#626262"/><rect x="8" y="269.6" width="2" height="1" fill="#626262"/><rect x="8" y="272.6" width="2" height="1" fill="#626262"/><rect x="0" y="275.5" width="10" height="1" fill="#7a7a7a"/><rect x="8" y="278.4" width="2" height="1" fill="#626262"/><rect x="8" y="281.4" width="2" height="1" fill="#626262"/><rect x="8" y="284.4" width="2" height="1" fill="#626262"/><rect x="8" y="287.3" width="2" height="1" fill="#626262"/><rect x="7" y="290.2" width="3" height="1" fill="#626262"/><rect x="8" y="293.2" width="2" height="1" fill="#626262"/><rect x="8" y="296.1" width="2" height="1" fill="#626262"/><rect x="8" y="299.1" width="2" height="1" fill="#626262"/><rect x="8" y="302.1" width="2" height="1" fill="#626262"/><rect x="0" y="305.0" width="10" height="1" fill="#7a7a7a"/><rect x="8" y="307.9" width="2" height="1" fill="#626262"/><rect x="8" y="310.9" width="2" height="1" fill="#626262"/><rect x="8" y="313.9" width="2" height="1" fill="#626262"/><rect x="8" y="316.8" width="2" height="1" fill="#626262"/><rect x="7" y="319.8" width="3" height="1" fill="#626262"/><rect x="8" y="322.7" width="2" height="1" fill="#626262"/><rect x="8" y="325.6" width="2" height="1" fill="#626262"/></svg>
<div class="t" style="left:23px;top:60.0px;font-size:5px;color:#858585;filter:blur(0.35px)">0</div>
<div class="t" style="left:23px;top:89.5px;font-size:5px;color:#858585;filter:blur(0.35px)">2</div>
<div class="t" style="left:23px;top:119.0px;font-size:5px;color:#858585;filter:blur(0.35px)">4</div>
<div class="t" style="left:23px;top:148.5px;font-size:5px;color:#858585;filter:blur(0.35px)">6</div>
<div class="t" style="left:23px;top:178.0px;font-size:5px;color:#858585;filter:blur(0.35px)">8</div>
<div class="t" style="left:23px;top:207.5px;font-size:5px;color:#858585;filter:blur(0.35px)">10</div>
<div class="t" style="left:23px;top:237.0px;font-size:5px;color:#858585;filter:blur(0.35px)">12</div>
<div class="t" style="left:23px;top:266.5px;font-size:5px;color:#858585;filter:blur(0.35px)">14</div>
<div class="t" style="left:23px;top:296.0px;font-size:5px;color:#858585;filter:blur(0.35px)">16</div>
<div class="t" style="left:23px;top:325.5px;font-size:5px;color:#858585;filter:blur(0.35px)">18</div>
<div class="t" style="left:23px;top:355.0px;font-size:5px;color:#858585;filter:blur(0.35px)">20</div>
<div class="a" style="left:31px;top:56px;width:775px;height:321px;background:#282828;"></div>
<div class="a" style="left:339px;top:85px;width:160px;height:264px;background:#1e1e1e;"></div>
<div class="a" style="left:340px;top:87px;width:157px;height:261px;background:#ffffff;"></div>
<div class="a" style="left:388px;top:263px;width:63px;height:41px;background:transparent;border:1px solid #a49cb8"></div>
<svg style="left:0;top:0" width="1000" height="537" viewBox="0 0 1000 537"><path d="M390 258 H441 V295 Q441 299.5 436.5 299.5 H394.5 Q390 299.5 390 295Z" fill="#e2f000" stroke="#7f8a00" stroke-width="1.3"/><path d="M409.5 299.5 V335 Q409.5 340.5 415.5 340.5 Q421.5 340.5 421.5 335 V299.5Z" fill="#8b4a1c" stroke="#4a2608" stroke-width="1"/><path d="M398.5 271 L408.5 275.5 L399.5 280.5" fill="none" stroke="#1a1a1a" stroke-width="1.8" stroke-linecap="round" stroke-linejoin="round"/><path d="M402.5 267.5 L407.5 271" fill="none" stroke="#1a1a1a" stroke-width="1.5" stroke-linecap="round"/><path d="M419.5 273 L426.5 267.5" fill="none" stroke="#1a1a1a" stroke-width="1.6" stroke-linecap="round"/><circle cx="427.5" cy="276" r="3.9" fill="#241204"/><path d="M408 284 Q410 290.5 413 289.5 Q415 288 416 285.5 Q417 289.5 419.5 289.5 Q422 289.5 424 284" fill="none" stroke="#1a1a1a" stroke-width="1.4" stroke-linecap="round" stroke-linejoin="round"/></svg>
<svg style="left:0;top:0" width="1000" height="537" viewBox="0 0 1000 537"><path d="M383.20 111.00 A2.60 2.60 0 0 1 384.14 107.50 A2.60 2.60 0 0 1 386.70 104.94 A2.60 2.60 0 0 1 390.20 104.00 A2.60 2.60 0 0 1 394.27 104.00 A2.60 2.60 0 0 1 398.35 104.00 A2.60 2.60 0 0 1 402.43 104.00 A2.60 2.60 0 0 1 406.50 104.00 A2.60 2.60 0 0 1 410.57 104.00 A2.60 2.60 0 0 1 414.65 104.00 A2.60 2.60 0 0 1 418.73 104.00 A2.60 2.60 0 0 1 422.80 104.00 A2.60 2.60 0 0 1 426.88 104.00 A2.60 2.60 0 0 1 430.95 104.00 A2.60 2.60 0 0 1 435.03 104.00 A2.60 2.60 0 0 1 439.10 104.00 A2.60 2.60 0 0 1 442.60 104.94 A2.60 2.60 0 0 1 445.16 107.50 A2.60 2.60 0 0 1 446.10 111.00 A2.60 2.60 0 0 1 446.25 115.00 A2.60 2.60 0 0 1 446.41 119.00 A2.60 2.60 0 0 1 446.56 123.00 A2.60 2.60 0 0 1 446.71 127.00 A2.60 2.60 0 0 1 446.86 131.00 A2.60 2.60 0 0 1 447.02 135.00 A2.60 2.60 0 0 1 447.17 139.00 A2.60 2.60 0 0 1 447.32 143.00 A2.60 2.60 0 0 1 447.48 147.00 A2.60 2.60 0 0 1 447.63 151.00 A2.60 2.60 0 0 1 447.78 155.00 A2.60 2.60 0 0 1 447.93 159.00 A2.60 2.60 0 0 1 448.09 163.00 A2.60 2.60 0 0 1 448.24 167.00 A2.60 2.60 0 0 1 448.39 171.00 A2.60 2.60 0 0 1 448.54 175.00 A2.60 2.60 0 0 1 448.70 179.00 A2.60 2.60 0 0 1 448.85 183.00 A2.60 2.60 0 0 1 449.00 187.00 A2.60 2.60 0 0 1 449.16 191.00 A2.60 2.60 0 0 1 449.31 195.00 A2.60 2.60 0 0 1 449.46 199.00 A2.60 2.60 0 0 1 449.61 203.00 A2.60 2.60 0 0 1 449.77 207.00 A2.60 2.60 0 0 1 449.92 211.00 A2.60 2.60 0 0 1 450.07 215.00 A2.60 2.60 0 0 1 450.23 219.00 A2.60 2.60 0 0 1 450.38 223.00 A2.60 2.60 0 0 1 450.53 227.00 A2.60 2.60 0 0 1 450.68 231.00 A2.60 2.60 0 0 1 450.84 235.00 A2.60 2.60 0 0 1 450.99 239.00 A2.60 2.60 0 0 1 451.14 243.00 A2.60 2.60 0 0 1 451.29 247.00 A2.60 2.60 0 0 1 451.45 251.00 A2.60 2.60 0 0 1 451.60 255.00 A2.60 2.60 0 0 1 450.66 258.50 A2.60 2.60 0 0 1 448.10 261.06 A2.60 2.60 0 0 1 444.60 262.00 A2.60 2.60 0 0 1 440.65 262.00 A2.60 2.60 0 0 1 436.71 262.00 A2.60 2.60 0 0 1 432.76 262.00 A2.60 2.60 0 0 1 428.81 262.00 A2.60 2.60 0 0 1 424.87 262.00 A2.60 2.60 0 0 1 420.92 262.00 A2.60 2.60 0 0 1 416.97 262.00 A2.60 2.60 0 0 1 413.03 262.00 A2.60 2.60 0 0 1 409.08 262.00 A2.60 2.60 0 0 1 405.13 262.00 A2.60 2.60 0 0 1 401.19 262.00 A2.60 2.60 0 0 1 397.24 262.00 A2.60 2.60 0 0 1 393.29 262.00 A2.60 2.60 0 0 1 389.35 262.00 A2.60 2.60 0 0 1 385.40 262.00 A2.60 2.60 0 0 1 381.90 261.06 A2.60 2.60 0 0 1 379.34 258.50 A2.60 2.60 0 0 1 378.40 255.00 A2.60 2.60 0 0 1 378.53 251.00 A2.60 2.60 0 0 1 378.67 247.00 A2.60 2.60 0 0 1 378.80 243.00 A2.60 2.60 0 0 1 378.93 239.00 A2.60 2.60 0 0 1 379.07 235.00 A2.60 2.60 0 0 1 379.20 231.00 A2.60 2.60 0 0 1 379.33 227.00 A2.60 2.60 0 0 1 379.47 223.00 A2.60 2.60 0 0 1 379.60 219.00 A2.60 2.60 0 0 1 379.73 215.00 A2.60 2.60 0 0 1 379.87 211.00 A2.60 2.60 0 0 1 380.00 207.00 A2.60 2.60 0 0 1 380.13 203.00 A2.60 2.60 0 0 1 380.27 199.00 A2.60 2.60 0 0 1 380.40 195.00 A2.60 2.60 0 0 1 380.53 191.00 A2.60 2.60 0 0 1 380.67 187.00 A2.60 2.60 0 0 1 380.80 183.00 A2.60 2.60 0 0 1 380.93 179.00 A2.60 2.60 0 0 1 381.07 175.00 A2.60 2.60 0 0 1 381.20 171.00 A2.60 2.60 0 0 1 381.33 167.00 A2.60 2.60 0 0 1 381.47 163.00 A2.60 2.60 0 0 1 381.60 159.00 A2.60 2.60 0 0 1 381.73 155.00 A2.60 2.60 0 0 1 381.87 151.00 A2.60 2.60 0 0 1 382.00 147.00 A2.60 2.60 0 0 1 382.13 143.00 A2.60 2.60 0 0 1 382.27 139.00 A2.60 2.60 0 0 1 382.40 135.00 A2.60 2.60 0 0 1 382.53 131.00 A2.60 2.60 0 0 1 382.67 127.00 A2.60 2.60 0 0 1 382.80 123.00 A2.60 2.60 0 0 1 382.93 119.00 A2.60 2.60 0 0 1 383.07 115.00 A2.60 2.60 0 0 1 383.20 111.00Z" fill="#00f8fc" stroke="#0a9696" stroke-width="1.5"/></svg>
<div class="a" style="left:21px;top:377px;width:787px;height:11px;background:#4d4d4d;"></div>
<div class="a" style="left:21px;top:377px;width:787px;height:1px;background:#1e1e1e;"></div>
<div class="t" style="left:27px;top:380px;font-size:6px;color:#cfcfcf;filter:blur(0.2px)">100%</div>
<div class="a" style="left:48px;top:378px;width:1px;height:9px;background:#464646;"></div>
<div class="t z" style="left:64px;top:380px;font-size:6px;color:#a8a8a8;">НЛ<span style="font-weight:normal">:439.2K/439.2K</span></div>
<div class="t" style="left:137px;top:380px;font-size:7px;color:#bbb;">&#x203A;</div>
<div class="a" style="left:145px;top:378px;width:1px;height:9px;background:#464646;"></div>
<div class="a" style="left:21px;top:388px;width:787px;height:13px;background:#424242;"></div>
<div class="a" style="left:22px;top:388px;width:27px;height:13px;background:#535353;"></div>
<div class="t z" style="left:26px;top:391px;font-size:6px;color:#dcdcdc;">ДЭЩ</div>
<div class="a" style="left:21px;top:401px;width:787px;height:1px;background:#353535;"></div>
<div class="a" style="left:21px;top:403px;width:787px;height:1px;background:#5e5e5e;"></div>
<svg style="left:801px;top:392px;" width="6" height="5" viewBox="0 0 6 5"><rect x="0" y="0" width="6" height="5" fill="#8a8a8a"/><rect x="1" y="1.3" width="4" height=".8" fill="#444"/><rect x="1" y="3" width="4" height=".8" fill="#444"/></svg>
<div class="a" style="left:21px;top:402px;width:787px;height:19px;background:#535353;"></div>
<div class="a" style="left:21px;top:401px;width:787px;height:1px;background:#353535;"></div>
<div class="a" style="left:21px;top:403px;width:787px;height:1px;background:#5e5e5e;"></div>
<div class="a" style="left:21px;top:420px;width:787px;height:1px;background:#4e4e4e;"></div>
<svg style="left:26px;top:409px;" width="8" height="8" viewBox="0 0 8 8"><rect x="0" y="0" width="1" height="7" fill="#9c9c9c"/><path d="M6 0L2 3.5L6 7z" fill="#9c9c9c"/></svg>
<svg style="left:41px;top:409px;" width="8" height="8" viewBox="0 0 8 8"><path d="M7 0L3.5 3.5L7 7z M3.5 0L0 3.5L3.5 7z" fill="#9c9c9c"/></svg>
<svg style="left:58px;top:409px;" width="8" height="8" viewBox="0 0 8 8"><path d="M1 0L7 3.5L1 7z" fill="#9c9c9c"/></svg>
<svg style="left:74px;top:409px;" width="8" height="8" viewBox="0 0 8 8"><path d="M0 0L3.5 3.5L0 7z M3.5 0L7 3.5L3.5 7z" fill="#9c9c9c"/></svg>
<svg style="left:90px;top:409px;" width="8" height="8" viewBox="0 0 8 8"><path d="M1 2.5H3L6 0V7L3 4.5H1z" fill="#9c9c9c"/></svg>
<svg style="left:104px;top:408px;" width="9" height="9" viewBox="0 0 9 9"><circle cx="4.5" cy="4.5" r="3" fill="none" stroke="#9c9c9c" stroke-width="1.5"/></svg>
<div class="a" style="left:116px;top:403px;width:1px;height:16px;background:#4a4a4a;"></div>
<svg style="left:124px;top:408px;" width="10" height="9" viewBox="0 0 10 9"><path d="M0 1L10 8M0 8L10 1" stroke="#9c9c9c" stroke-width="1.2"/><circle cx="1.5" cy="1.5" r="1.5" fill="#9c9c9c"/><circle cx="1.5" cy="7.5" r="1.5" fill="#9c9c9c"/></svg>
<svg style="left:142px;top:408px;" width="9" height="9" viewBox="0 0 9 9"><rect x="0" y="0" width="9" height="9" fill="#777"/><path d="M0 9L9 0V9z" fill="#9c9c9c"/></svg>
<div class="a" style="left:156px;top:403px;width:1px;height:16px;background:#4a4a4a;"></div>
<div class="a" style="left:21px;top:421px;width:787px;height:104px;background:#535353;"></div>
<div class="a" style="left:21px;top:526px;width:787px;height:1px;background:#484848;"></div>
<div class="a" style="left:21px;top:527px;width:787px;height:10px;background:#505050;"></div>
<div class="a" style="left:379px;top:471px;width:76px;height:9px;background:#454545;"></div>
<div class="t z" style="left:391px;top:472px;font-size:6px;color:#ececec;">ШНЛЖЮДЭ</div>
<svg style="left:447px;top:474px;" width="5" height="3" viewBox="0 0 5 3"><path d="M0.5 0.5L2.5 2.5L4.5 0.5" fill="none" stroke="#aaa" stroke-width="1"/></svg>
<svg style="left:24px;top:530px;" width="8" height="5" viewBox="0 0 8 5"><rect x="0" y="0" width="8" height="1" fill="#a8a8a8"/><rect x="0" y="2" width="8" height="1" fill="#a8a8a8"/><rect x="0" y="4" width="8" height="1" fill="#a8a8a8"/></svg>
<svg style="left:40px;top:529px;" width="7" height="6" viewBox="0 0 7 6"><path d="M0 6 Q1 2.5 4.5 2 L4.5 0 L7 2.8 L4.5 5.5 L4.5 3.8 Q2 3.8 0 6z" fill="#a8a8a8"/></svg>
<svg style="left:162px;top:532px;" width="4" height="2" viewBox="0 0 4 2"><rect x="0" y="0" width="4" height="2" fill="#a8a8a8"/></svg>
<div class="a" style="left:176px;top:529px;width:44px;height:1px;background:#8a8a8a;"></div>
<div class="a" style="left:176px;top:530px;width:44px;height:1px;background:#444;"></div>
<svg style="left:227px;top:530px;" width="10" height="5" viewBox="0 0 10 5"><path d="M0 5L5 0L10 5z" fill="#a8a8a8"/></svg>
<div class="a" style="left:808px;top:32px;width:192px;height:505px;background:#535353;"></div>
<div class="a" style="left:808px;top:32px;width:192px;height:6px;background:#3f3f3f;"></div>
<svg style="left:829px;top:33px;" width="6" height="4" viewBox="0 0 6 4"><path d="M0.5 0.5L2.5 2L0.5 3.5M3.5 0.5L5.5 2L3.5 3.5" fill="none" stroke="#bbb" stroke-width="1"/></svg>
<svg style="left:956px;top:33px;" width="6" height="4" viewBox="0 0 6 4"><path d="M0.5 0.5L2.5 2L0.5 3.5M3.5 0.5L5.5 2L3.5 3.5" fill="none" stroke="#bbb" stroke-width="1"/></svg>
<svg style="left:991px;top:33px;" width="6" height="4" viewBox="0 0 6 4"><path d="M0.5 0.5L2.5 2L0.5 3.5M3.5 0.5L5.5 2L3.5 3.5" fill="none" stroke="#bbb" stroke-width="1"/></svg>
<div class="a" style="left:808px;top:38px;width:8px;height:408px;background:#4a4a4a;"></div>
<div class="a" style="left:816px;top:38px;width:1px;height:408px;background:#3c3c3c;"></div>
<div class="a" style="left:817px;top:38px;width:19px;height:499px;background:#535353;"></div>
<div class="a" style="left:836px;top:38px;width:2px;height:499px;background:#3c3c3c;"></div>
<div class="a" style="left:964px;top:38px;width:1px;height:499px;background:#3c3c3c;"></div>
<div class="a" style="left:965px;top:38px;width:35px;height:499px;background:#535353;"></div>
<div class="a" style="left:997px;top:38px;width:1px;height:499px;background:#464646;"></div>
<svg style="left:822px;top:46px;" width="11" height="11" viewBox="0 0 11 11"><circle cx="5.5" cy="5.5" r="2.2" fill="#d8d8d8"/><line x1="8.5" y1="5.5" x2="10.8" y2="5.5" stroke="#d8d8d8" stroke-width="1.1"/><line x1="7.621320343559643" y1="7.621320343559642" x2="9.247665940288702" y2="9.247665940288702" stroke="#d8d8d8" stroke-width="1.1"/><line x1="5.5" y1="8.5" x2="5.5" y2="10.8" stroke="#d8d8d8" stroke-width="1.1"/><line x1="3.3786796564403576" y1="7.621320343559643" x2="1.7523340597112984" y2="9.247665940288702" stroke="#d8d8d8" stroke-width="1.1"/><line x1="2.5" y1="5.5" x2="0.20000000000000018" y2="5.500000000000001" stroke="#d8d8d8" stroke-width="1.1"/><line x1="3.378679656440357" y1="3.3786796564403576" x2="1.7523340597112975" y2="1.7523340597112984" stroke="#d8d8d8" stroke-width="1.1"/><line x1="5.499999999999999" y1="2.5" x2="5.499999999999999" y2="0.20000000000000018" stroke="#d8d8d8" stroke-width="1.1"/><line x1="7.621320343559642" y1="3.378679656440357" x2="9.247665940288702" y2="1.7523340597112975" stroke="#d8d8d8" stroke-width="1.1"/></svg>
<svg style="left:821px;top:62px;" width="12" height="8" viewBox="0 0 12 8"><path d="M0 8V5L2 3L4 5L6 1L8 4L10 2L12 5V8z" fill="#d8d8d8"/></svg>
<div class="a" style="left:817px;top:75px;width:19px;height:1px;background:#474747;"></div>
<div class="a" style="left:819px;top:80px;width:15px;height:13px;background:#2f2f2f;"></div>
<svg style="left:821px;top:82px;" width="10" height="10" viewBox="0 0 10 10"><circle cx="3" cy="3" r="2.3" fill="none" stroke="#d8d8d8" stroke-width="1.2"/><rect x="7" y="0" width="2" height="2" fill="#d8d8d8"/><rect x="7" y="3" width="2" height="2" fill="#d8d8d8"/><rect x="0" y="7" width="10" height="2" fill="#d8d8d8"/></svg>
<svg style="left:821px;top:101px;" width="11" height="12" viewBox="0 0 11 12"><rect x="0.5" y="0.5" width="6" height="8" fill="none" stroke="#d8d8d8"/><rect x="4.5" y="4.5" width="6" height="7" fill="#535353" stroke="#d8d8d8"/></svg>
<svg style="left:822px;top:121px;" width="10" height="11" viewBox="0 0 10 11"><path d="M2 0L4 2L2 4L0 2z M6 1L8 3L6 5L4 3z" fill="#d8d8d8"/><rect x="2" y="6" width="6" height="5" fill="#d8d8d8"/></svg>
<svg style="left:821px;top:140px;" width="12" height="8" viewBox="0 0 12 8"><rect x="0" y="1" width="12" height="1.2" fill="#d8d8d8"/><rect x="0" y="6" width="12" height="1.2" fill="#d8d8d8"/><circle cx="3" cy="1.6" r="1.8" fill="#d8d8d8"/><circle cx="8" cy="6.6" r="1.8" fill="#d8d8d8"/></svg>
<div class="a" style="left:817px;top:153px;width:19px;height:1px;background:#474747;"></div>
<div class="t" style="left:821px;top:160px;font-size:10px;color:#d8d8d8;">A</div>
<div class="a" style="left:830px;top:160px;width:1px;height:9px;background:#d8d8d8;"></div>
<svg style="left:824px;top:175px;" width="7" height="9" viewBox="0 0 7 9"><path d="M3 0H7V1H6V9H5V1H4.5V9H3.5V5Q0 5 0 2.5Q0 0 3 0z" fill="#d8d8d8"/></svg>
<div class="a" style="left:817px;top:190px;width:19px;height:1px;background:#474747;"></div>
<div class="t" style="left:821px;top:195px;font-size:11px;color:#d8d8d8;font-family:Liberation Serif;font-style:italic">A</div>
<div class="a" style="left:817px;top:210px;width:19px;height:1px;background:#474747;"></div>
<div class="a" style="left:838px;top:38px;width:126px;height:14px;background:#424242;"></div>
<div class="a" style="left:838px;top:38px;width:21px;height:14px;background:#535353;"></div>
<div class="t z" style="left:843px;top:42px;font-size:7px;color:#e0e0e0;">ЮД</div>
<div class="t z" style="left:864px;top:42px;font-size:7px;color:#aaaaaa;">НЛ</div>
<svg style="left:955px;top:43px;" width="7" height="6" viewBox="0 0 7 6"><rect x="0" y="0" width="7" height="6" fill="#888"/><rect x="1" y="1.5" width="5" height="1" fill="#444"/><rect x="1" y="3.5" width="5" height="1" fill="#444"/></svg>
<div class="a" style="left:838px;top:52px;width:126px;height:112px;background:#535353;"></div>
<div class="a" style="left:861px;top:57px;width:77px;height:106px;background:linear-gradient(to top,#000,rgba(0,0,0,0)),linear-gradient(to right,#fff,#f0105c)"></div>
<div class="a" style="left:860px;top:56px;width:79px;height:108px;background:transparent;border:1px solid #3a3a3a"></div>
<div class="a" style="left:945px;top:57px;width:13px;height:106px;background:linear-gradient(to bottom,#ff0000 0%,#ff00ff 17%,#0000ff 33%,#00ffff 50%,#00ff00 67%,#ffff00 83%,#ff0000 100%);border:1px solid #3a3a3a"></div>
<svg style="left:941px;top:59px;" width="5" height="5" viewBox="0 0 5 5"><path d="M0 0L5 2.5L0 5z" fill="#fff"/></svg>
<svg style="left:914px;top:136px;" width="7" height="7" viewBox="0 0 7 7"><circle cx="3.5" cy="3.5" r="2.8" fill="none" stroke="#c8c8c8" stroke-width="1"/></svg>
<div class="a" style="left:848px;top:64px;width:10px;height:10px;background:#1f0611;border:1px solid #b8b8b8"></div>
<div class="a" style="left:843px;top:59px;width:10px;height:10px;background:#efbdd0;border:1px solid #f8f8f8"></div>
<div class="a" style="left:838px;top:164px;width:126px;height:1px;background:#3f3f3f;"></div>
<div class="a" style="left:838px;top:165px;width:126px;height:15px;background:#424242;"></div>
<div class="a" style="left:860px;top:166px;width:21px;height:14px;background:#535353;"></div>
<div class="t z" style="left:842px;top:170px;font-size:7px;color:#a8a8a8;">ЩП</div>
<div class="t z" style="left:863px;top:170px;font-size:7px;color:#e0e0e0;">ЮД</div>
<svg style="left:955px;top:171px;" width="7" height="6" viewBox="0 0 7 6"><rect x="0" y="0" width="7" height="6" fill="#888"/><rect x="1" y="1.5" width="5" height="1" fill="#444"/><rect x="1" y="3.5" width="5" height="1" fill="#444"/></svg>
<div class="a" style="left:838px;top:180px;width:126px;height:67px;background:#535353;"></div>
<div class="a" style="left:840px;top:186px;width:10px;height:10px;background:linear-gradient(135deg,#fff 45%,#d22 46%,#d22 54%,#fff 55%);"></div>
<div class="a" style="left:857px;top:186px;width:10px;height:10px;background:#4c4c4c;"></div>
<div class="a" style="left:874px;top:186px;width:10px;height:10px;background:linear-gradient(#6fd6ee,#2aa8d8);"></div>
<div class="a" style="left:890px;top:186px;width:10px;height:10px;background:linear-gradient(#bfeaff,#59c2ee);"></div>
<div class="a" style="left:907px;top:186px;width:10px;height:10px;background:linear-gradient(#fff,#cde);"></div>
<div class="a" style="left:924px;top:186px;width:10px;height:10px;background:linear-gradient(90deg,#fff 60%,#a060c0);"></div>
<div class="a" style="left:940px;top:186px;width:10px;height:10px;background:linear-gradient(90deg,#ee0 30%,#fff 30%,#fff 60%,#a050b0 60%);"></div>
<div class="a" style="left:840px;top:203px;width:10px;height:10px;background:linear-gradient(135deg,#fff,#222);"></div>
<div class="a" style="left:857px;top:203px;width:10px;height:10px;background:radial-gradient(#f66,#900);"></div>
<div class="a" style="left:874px;top:203px;width:10px;height:10px;background:#575757;"></div>
<div class="a" style="left:890px;top:203px;width:10px;height:10px;background:#575757;"></div>
<div class="a" style="left:907px;top:203px;width:10px;height:10px;background:#585858;"></div>
<div class="a" style="left:924px;top:203px;width:10px;height:10px;background:radial-gradient(#f4a,#603);"></div>
<div class="a" style="left:940px;top:203px;width:10px;height:10px;background:#5c5c50;"></div>
<div class="a" style="left:840px;top:220px;width:10px;height:10px;background:linear-gradient(#ddd,#111);"></div>
<div class="a" style="left:857px;top:220px;width:10px;height:10px;background:linear-gradient(135deg,#9cf,#15a);"></div>
<div class="a" style="left:874px;top:220px;width:10px;height:10px;background:#aaa;"></div>
<div class="a" style="left:890px;top:220px;width:10px;height:10px;background:linear-gradient(#555,#333);"></div>
<div class="a" style="left:907px;top:220px;width:10px;height:10px;background:#7a6a3a;"></div>
<div class="a" style="left:924px;top:220px;width:10px;height:10px;background:linear-gradient(#c9a070,#6a4a2a);"></div>
<div class="a" style="left:940px;top:220px;width:10px;height:10px;background:linear-gradient(#e02050,#701020);"></div>
<div class="a" style="left:884px;top:213px;width:8px;height:8px;background:transparent;"></div>
<div class="a" style="left:940px;top:203px;width:10px;height:10px;background:transparent;border:2px solid #cfc8a8;background:#5c5c50"></div>
<div class="a" style="left:957px;top:184px;width:5px;height:33px;background:#4a4a4a;"></div>
<div class="a" style="left:957px;top:192px;width:5px;height:20px;background:#6a6a6a;"></div>
<div class="a" style="left:838px;top:232px;width:126px;height:1px;background:#4d4d4d;"></div>
<svg style="left:911px;top:236px;" width="9" height="9" viewBox="0 0 9 9"><circle cx="4.5" cy="4.5" r="4" fill="#c8c8c8"/><path d="M2.5 6.5L6.5 2.5" stroke="#535353" stroke-width="1.4"/></svg>
<svg style="left:927px;top:236px;" width="9" height="9" viewBox="0 0 9 9"><path d="M0.5 2.5H6.5V8.5H0.5z" fill="none" stroke="#c8c8c8" stroke-width="1.2"/><path d="M3 0.5H8.5V6" fill="none" stroke="#c8c8c8" stroke-width="1.2"/></svg>
<svg style="left:943px;top:236px;" width="7" height="9" viewBox="0 0 7 9"><rect x="0" y="1" width="7" height="1.2" fill="#b0b0b0"/><path d="M1 3H6V9H1z" fill="none" stroke="#b0b0b0"/></svg>
<div class="a" style="left:838px;top:247px;width:126px;height:1px;background:#3f3f3f;"></div>
<div class="a" style="left:838px;top:248px;width:126px;height:13px;background:#424242;"></div>
<div class="a" style="left:838px;top:248px;width:31px;height:13px;background:#535353;"></div>
<div class="t z" style="left:842px;top:251px;font-size:7px;color:#e0e0e0;">ЩПБШ</div>
<div class="t z" style="left:875px;top:251px;font-size:7px;color:#a0a0a0;">ПБ</div>
<svg style="left:955px;top:253px;" width="7" height="6" viewBox="0 0 7 6"><rect x="0" y="0" width="7" height="6" fill="#888"/><rect x="1" y="1.5" width="5" height="1" fill="#444"/><rect x="1" y="3.5" width="5" height="1" fill="#444"/></svg>
<div class="a" style="left:838px;top:261px;width:126px;height:94px;background:#535353;"></div>
<div class="a" style="left:838px;top:262px;width:118px;height:92px;background:#4a4a4a;"></div>
<div class="a" style="left:838px;top:263px;width:118px;height:5px;background:#4d4d4d;"></div>
<div class="a" style="left:838px;top:269px;width:118px;height:11px;background:#4d4d4d;"></div>
<div class="a" style="left:840px;top:271px;width:8px;height:8px;background:transparent;border:1px dotted #5e5e5e"></div>
<svg style="left:855px;top:271px;" width="7" height="8" viewBox="0 0 7 8"><path d="M0 0H5L7 2V8H0z" fill="#d8d8d8"/><rect x="1.5" y="3" width="4" height="1" fill="#777"/><rect x="1.5" y="5" width="4" height="1" fill="#777"/></svg>
<div class="t z" style="left:868px;top:271px;font-size:7px;color:#c4c4c4;letter-spacing:0.4px">БШНЛ</div>
<div class="a" style="left:838px;top:281px;width:118px;height:11px;background:#4d4d4d;"></div>
<div class="a" style="left:840px;top:283px;width:8px;height:8px;background:transparent;border:1px dotted #5e5e5e"></div>
<svg style="left:855px;top:283px;" width="7" height="8" viewBox="0 0 7 8"><path d="M0 0H5L7 2V8H0z" fill="#d8d8d8"/><rect x="1.5" y="3" width="4" height="1" fill="#777"/><rect x="1.5" y="5" width="4" height="1" fill="#777"/></svg>
<div class="t z" style="left:868px;top:283px;font-size:7px;color:#c4c4c4;letter-spacing:0.4px">БШНЛ</div>
<div class="a" style="left:838px;top:293px;width:118px;height:11px;background:#4d4d4d;"></div>
<div class="a" style="left:840px;top:295px;width:8px;height:8px;background:transparent;border:1px dotted #5e5e5e"></div>
<svg style="left:855px;top:295px;" width="7" height="8" viewBox="0 0 7 8"><path d="M0 0H5L7 2V8H0z" fill="#d8d8d8"/><rect x="1.5" y="3" width="4" height="1" fill="#777"/><rect x="1.5" y="5" width="4" height="1" fill="#777"/></svg>
<div class="t z" style="left:868px;top:295px;font-size:7px;color:#c4c4c4;letter-spacing:0.4px">БШНЛ</div>
<div class="a" style="left:838px;top:305px;width:118px;height:11px;background:#4d4d4d;"></div>
<div class="a" style="left:840px;top:307px;width:8px;height:8px;background:transparent;border:1px dotted #5e5e5e"></div>
<svg style="left:855px;top:307px;" width="7" height="8" viewBox="0 0 7 8"><path d="M0 0H5L7 2V8H0z" fill="#d8d8d8"/><rect x="1.5" y="3" width="4" height="1" fill="#777"/><rect x="1.5" y="5" width="4" height="1" fill="#777"/></svg>
<div class="t z" style="left:868px;top:307px;font-size:7px;color:#c4c4c4;letter-spacing:0.4px">БШНЛ</div>
<div class="a" style="left:838px;top:317px;width:118px;height:11px;background:#4d4d4d;"></div>
<div class="a" style="left:840px;top:319px;width:8px;height:8px;background:transparent;border:1px dotted #5e5e5e"></div>
<svg style="left:855px;top:319px;" width="7" height="8" viewBox="0 0 7 8"><path d="M0 0H5L7 2V8H0z" fill="#d8d8d8"/><rect x="1.5" y="3" width="4" height="1" fill="#777"/><rect x="1.5" y="5" width="4" height="1" fill="#777"/></svg>
<div class="t z" style="left:868px;top:319px;font-size:7px;color:#c4c4c4;letter-spacing:0.4px">БШНЛ</div>
<div class="a" style="left:838px;top:329px;width:118px;height:11px;background:#4d4d4d;"></div>
<div class="a" style="left:840px;top:331px;width:8px;height:8px;background:transparent;border:1px dotted #5e5e5e"></div>
<svg style="left:855px;top:331px;" width="7" height="8" viewBox="0 0 7 8"><path d="M0 0H5L7 2V8H0z" fill="#d8d8d8"/><rect x="1.5" y="3" width="4" height="1" fill="#777"/><rect x="1.5" y="5" width="4" height="1" fill="#777"/></svg>
<div class="t z" style="left:868px;top:331px;font-size:7px;color:#c4c4c4;letter-spacing:0.4px">БШНЛ</div>
<div class="a" style="left:838px;top:341px;width:118px;height:11px;background:#686868;"></div>
<div class="a" style="left:840px;top:343px;width:8px;height:8px;background:transparent;border:1px dotted #5e5e5e"></div>
<svg style="left:855px;top:343px;" width="7" height="8" viewBox="0 0 7 8"><path d="M0 0H5L7 2V8H0z" fill="#d8d8d8"/><rect x="1.5" y="3" width="4" height="1" fill="#777"/><rect x="1.5" y="5" width="4" height="1" fill="#777"/></svg>
<div class="t z" style="left:868px;top:343px;font-size:7px;color:#e8e8e8;letter-spacing:0.4px">БШНЛ</div>
<div class="a" style="left:855px;top:263px;width:7px;height:3px;background:#cfcfcf;"></div>
<div class="a" style="left:870px;top:264px;width:26px;height:2px;background:#8a8a8a;"></div>
<div class="a" style="left:957px;top:262px;width:6px;height:92px;background:#4a4a4a;"></div>
<div class="a" style="left:957px;top:315px;width:6px;height:31px;background:#6a6a6a;"></div>
<div class="a" style="left:838px;top:354px;width:126px;height:14px;background:#535353;"></div>
<svg style="left:911px;top:357px;" width="9" height="9" viewBox="0 0 9 9"><rect x="0.5" y="3.5" width="6" height="5" fill="none" stroke="#d0d0d0"/><path d="M2.5 0.5H8.5V6.5" fill="none" stroke="#d0d0d0"/><circle cx="3.5" cy="6" r="1.2" fill="#d0d0d0"/></svg>
<svg style="left:927px;top:357px;" width="10" height="9" viewBox="0 0 10 9"><path d="M0.5 2.5H3L4 0.5H6L7 2.5H9.5V8.5H0.5z" fill="#d6d6d6"/><circle cx="5" cy="5.5" r="1.8" fill="#535353"/></svg>
<svg style="left:943px;top:357px;" width="7" height="9" viewBox="0 0 7 9"><rect x="0" y="1" width="7" height="1.2" fill="#c8c8c8"/><path d="M1 3H6V9H1z" fill="#c8c8c8"/><path d="M2.5 4V8M4.5 4V8" stroke="#535353" stroke-width=".8"/></svg>
<div class="a" style="left:838px;top:367px;width:126px;height:1px;background:#3f3f3f;"></div>
<div class="a" style="left:838px;top:368px;width:126px;height:14px;background:#424242;"></div>
<div class="a" style="left:838px;top:368px;width:20px;height:14px;background:#535353;"></div>
<div class="t z" style="left:842px;top:372px;font-size:7px;color:#e6e6e6;">ЩП</div>
<div class="t z" style="left:864px;top:372px;font-size:7px;color:#a8a8a8;">НЛ</div>
<div class="t z" style="left:885px;top:372px;font-size:7px;color:#a8a8a8;">ПБ</div>
<svg style="left:955px;top:373px;" width="7" height="6" viewBox="0 0 7 6"><rect x="0" y="0" width="7" height="6" fill="#888"/><rect x="1" y="1.5" width="5" height="1" fill="#444"/><rect x="1" y="3.5" width="5" height="1" fill="#444"/></svg>
<div class="a" style="left:838px;top:382px;width:126px;height:155px;background:#535353;"></div>
<div class="a" style="left:842px;top:386px;width:42px;height:12px;background:#474747;"></div>
<svg style="left:845px;top:388px;" width="7" height="8" viewBox="0 0 7 8"><circle cx="4.5" cy="2.8" r="2.3" fill="none" stroke="#ddd" stroke-width="1.2"/><path d="M3 4.5L0.5 7.5" stroke="#ddd" stroke-width="1.3"/></svg>
<div class="t z" style="left:853px;top:389px;font-size:7px;color:#dddddd;">ЮД</div>
<svg style="left:879px;top:390px;" width="5" height="3" viewBox="0 0 5 3"><path d="M0.5 0.5L2.5 2.5L4.5 0.5" fill="none" stroke="#aaa" stroke-width="1"/></svg>
<svg style="left:890px;top:388px;" width="10" height="8" viewBox="0 0 10 8"><rect x="0.5" y="0.5" width="9" height="7" fill="none" stroke="#d0d0d0"/><path d="M1 7L4 3.5L6 5.5L7.5 4L9 7z" fill="#d0d0d0"/></svg>
<svg style="left:904px;top:388px;" width="8" height="8" viewBox="0 0 8 8"><circle cx="4" cy="4" r="3.5" fill="none" stroke="#d0d0d0"/><path d="M4 0.5A3.5 3.5 0 0 1 4 7.5z" fill="#d0d0d0"/></svg>
<svg style="left:917px;top:388px;" width="8" height="8" viewBox="0 0 8 8"><path d="M0 0H8V2H5V8H3V2H0z" fill="#d0d0d0"/></svg>
<svg style="left:930px;top:388px;" width="8" height="8" viewBox="0 0 8 8"><path d="M1.5 0V6.5H8M0 1.5H6.5V8" fill="none" stroke="#d0d0d0" stroke-width="1.2"/></svg>
<svg style="left:943px;top:388px;" width="7" height="8" viewBox="0 0 7 8"><path d="M1.5 3.5V2Q1.5 0 3.5 0Q5.5 0 5.5 2V3.5" fill="none" stroke="#d0d0d0" stroke-width="1.1"/><rect x="0.5" y="3.5" width="6" height="4.5" fill="#d0d0d0"/></svg>
<svg style="left:956px;top:387px;" width="9" height="9" viewBox="0 0 9 9"><circle cx="4.5" cy="4.5" r="3.5" fill="#eee"/></svg>
<div class="a" style="left:838px;top:399px;width:126px;height:1px;background:#484848;"></div>
<div class="a" style="left:842px;top:401px;width:60px;height:11px;background:#474747;"></div>
<div class="t z" style="left:846px;top:403px;font-size:7px;color:#e0e0e0;">ДЭ</div>
<svg style="left:895px;top:405px;" width="5" height="3" viewBox="0 0 5 3"><path d="M0.5 0.5L2.5 2.5L4.5 0.5" fill="none" stroke="#aaa" stroke-width="1"/></svg>
<div class="t z" style="left:905px;top:403px;font-size:6px;color:#b8b8b8;">ПБШНЛ</div>
<div class="a" style="left:934px;top:401px;width:28px;height:11px;background:#474747;"></div>
<div class="t" style="left:937px;top:403px;font-size:6px;color:#cfcfcf;">100%</div>
<svg style="left:957px;top:405px;" width="5" height="3" viewBox="0 0 5 3"><path d="M0.5 0.5L2.5 2.5L4.5 0.5" fill="none" stroke="#aaa" stroke-width="1"/></svg>
<div class="t z" style="left:842px;top:417px;font-size:6px;color:#bdbdbd;">ЩП<span style="font-weight:normal">:</span></div>
<svg style="left:859px;top:416px;" width="8" height="8" viewBox="0 0 8 8"><rect x="0.5" y="0.5" width="7" height="7" fill="none" stroke="#9a9a9a" stroke-dasharray="1 1"/></svg>
<svg style="left:871px;top:416px;" width="8" height="8" viewBox="0 0 8 8"><path d="M0.5 7.5L7.5 0.5" stroke="#c4c4c4" stroke-width="1.2"/></svg>
<svg style="left:883px;top:415px;" width="10" height="10" viewBox="0 0 10 10"><path d="M5 0L7 2H5.6V4.4H8V3L10 5L8 7V5.6H5.6V8H7L5 10L3 8H4.4V5.6H2V7L0 5L2 3V4.4H4.4V2H3z" fill="#c4c4c4"/></svg>
<svg style="left:896px;top:416px;" width="9" height="8" viewBox="0 0 9 8"><path d="M1 0V6.5H9M0 1.5H6.5V7" fill="none" stroke="#c4c4c4" stroke-width="1.1"/></svg>
<svg style="left:908px;top:415px;" width="7" height="9" viewBox="0 0 7 9"><path d="M1.5 4V2.2Q1.5 0.5 3.5 0.5Q5.5 0.5 5.5 2.2V4" fill="none" stroke="#d8d8d8" stroke-width="1.1"/><rect x="0.5" y="4" width="6" height="5" fill="#d8d8d8"/></svg>
<div class="t z" style="left:918px;top:417px;font-size:6px;color:#bdbdbd;">БШ<span style="font-weight:normal">:</span></div>
<div class="a" style="left:934px;top:415px;width:28px;height:11px;background:#474747;"></div>
<div class="t" style="left:937px;top:417px;font-size:6px;color:#cfcfcf;">100%</div>
<svg style="left:957px;top:419px;" width="5" height="3" viewBox="0 0 5 3"><path d="M0.5 0.5L2.5 2.5L4.5 0.5" fill="none" stroke="#aaa" stroke-width="1"/></svg>
<div class="a" style="left:838px;top:428px;width:126px;height:1px;background:#484848;"></div>
<div class="a" style="left:838px;top:429px;width:126px;height:96px;background:#535353;"></div>
<div class="a" style="left:838px;top:452px;width:126px;height:1px;background:#474747;"></div>
<div class="a" style="left:838px;top:475px;width:126px;height:1px;background:#474747;"></div>
<div class="a" style="left:838px;top:498px;width:126px;height:1px;background:#474747;"></div>
<div class="a" style="left:838px;top:510px;width:126px;height:15px;background:#5a5a5a;"></div>
<div class="a" style="left:865px;top:436px;width:8px;height:10px;background:#ddd;background-image:linear-gradient(45deg,#999 25%,transparent 25%,transparent 75%,#999 75%),linear-gradient(45deg,#999 25%,transparent 25%,transparent 75%,#999 75%);background-size:4px 4px;background-position:0 0,2px 2px"></div>
<div class="a" style="left:865px;top:459px;width:8px;height:10px;background:#ddd;background-image:linear-gradient(45deg,#999 25%,transparent 25%,transparent 75%,#999 75%),linear-gradient(45deg,#999 25%,transparent 25%,transparent 75%,#999 75%);background-size:4px 4px;background-position:0 0,2px 2px"></div>
<div class="a" style="left:865px;top:482px;width:8px;height:10px;background:#ddd;background-image:linear-gradient(45deg,#999 25%,transparent 25%,transparent 75%,#999 75%),linear-gradient(45deg,#999 25%,transparent 25%,transparent 75%,#999 75%);background-size:4px 4px;background-position:0 0,2px 2px"></div>
<div class="a" style="left:865px;top:505px;width:8px;height:10px;background:#ddd;background-image:linear-gradient(45deg,#999 25%,transparent 25%,transparent 75%,#999 75%),linear-gradient(45deg,#999 25%,transparent 25%,transparent 75%,#999 75%);background-size:4px 4px;background-position:0 0,2px 2px"></div>
<div class="a" style="left:857px;top:429px;width:10px;height:7px;background:#f0f0f0;"></div>
<svg style="left:841px;top:517px;" width="9" height="6" viewBox="0 0 9 6"><path d="M0 3Q4.5 -1 9 3Q4.5 7 0 3z" fill="#ddd"/><circle cx="4.5" cy="3" r="1.4" fill="#535353"/></svg>
<div class="t z" style="left:876px;top:441px;font-size:7px;color:#e0e0e0;">Д</div>
<div class="t z" style="left:876px;top:518px;font-size:6px;color:#d0d0d0;">ДЭ<span style="font-weight:normal"> 1</span></div>
<div class="a" style="left:838px;top:525px;width:126px;height:12px;background:#535353;"></div>
<svg style="left:859px;top:527px;" width="9" height="8" viewBox="0 0 9 8"><path d="M1 4Q1 1 3.5 1H4.5M4.5 7H3.5Q1 7 1 4M5 1H5.5Q8 1 8 4Q8 7 5.5 7H5" fill="none" stroke="#6a6a6a" stroke-width="1.2"/></svg>
<div class="t" style="left:873px;top:526px;font-size:8px;color:#d0d0d0;font-family:Liberation Serif"><i>fx</i></div>
<svg style="left:887px;top:527px;" width="10" height="8" viewBox="0 0 10 8"><rect x="0" y="0" width="10" height="8" fill="#d8d8d8"/><circle cx="5" cy="4" r="2.3" fill="#535353"/></svg>
<svg style="left:902px;top:527px;" width="8" height="8" viewBox="0 0 8 8"><circle cx="4" cy="4" r="3.6" fill="none" stroke="#d8d8d8" stroke-width="1"/><path d="M4 0.4A3.6 3.6 0 0 1 4 7.6z" fill="#d8d8d8"/></svg>
<svg style="left:915px;top:527px;" width="10" height="8" viewBox="0 0 10 8"><path d="M0 1H4L5 2H10V8H0z" fill="#d8d8d8"/></svg>
<svg style="left:929px;top:527px;" width="9" height="9" viewBox="0 0 9 9"><path d="M0.5 2.5H6.5V8.5H0.5z" fill="none" stroke="#d8d8d8" stroke-width="1.1"/><path d="M3 0.5H8.5V6" fill="none" stroke="#d8d8d8" stroke-width="1.1"/></svg>
<svg style="left:943px;top:526px;" width="7" height="9" viewBox="0 0 7 9"><rect x="0" y="1" width="7" height="1.2" fill="#c8c8c8"/><path d="M1 3H6V9H1z" fill="#c8c8c8"/><path d="M2.5 4V8M4.5 4V8" stroke="#535353" stroke-width=".8"/></svg>
<div class="a" style="left:965px;top:38px;width:33px;height:23px;background:#535353;"></div>
<div class="a" style="left:965px;top:60px;width:33px;height:1px;background:#474747;"></div>
<svg style="left:970px;top:47px;" width="12" height="9" viewBox="0 0 12 9"><path d="M3 9Q0 9 0 6Q0 3.5 3 3.5Q4 0 7.5 0.5Q11 1 11 4.5Q12 5 12 7Q12 9 10 9z" fill="#d8d8d8"/></svg>
<svg style="left:985px;top:48px;" width="7" height="7" viewBox="0 0 7 7"><rect x="0" y="0" width="7" height="1.5" fill="#ddd"/><rect x="0" y="3" width="7" height="1.5" fill="#ddd"/><rect x="0" y="6" width="7" height="1.2" fill="#ddd"/></svg>
<div class="t" style="left:967px;top:515px;font-size:14px;font-weight:bold;font-style:italic;color:#6a60e0;-webkit-text-stroke:0.8px #e8e8ff;letter-spacing:-1px">JK3</div>
<div class="a" style="left:666px;top:74px;width:147px;height:196px;background:#2a2a2a;"></div>
<div class="a" style="left:667px;top:75px;width:145px;height:194px;background:#535353;border:1px solid #3b3b3b"></div>
<div class="a" style="left:668px;top:76px;width:143px;height:14px;background:#424242;"></div>
<div class="a" style="left:669px;top:76px;width:21px;height:14px;background:#535353;"></div>
<div class="t z" style="left:673px;top:80px;font-size:7px;color:#e8e8e8;">ЮД</div>
<svg style="left:794px;top:80px;" width="7" height="6" viewBox="0 0 7 6"><path d="M0 0L3 3L0 6z M3.5 0L6.5 3L3.5 6z" fill="#c8c8c8"/></svg>
<div class="a" style="left:803px;top:79px;width:1px;height:8px;background:#888;"></div>
<svg style="left:807px;top:80px;" width="6" height="6" viewBox="0 0 6 6"><rect x="0" y="0" width="6" height="6" fill="#999"/><rect x="1" y="1.5" width="4" height="1" fill="#444"/><rect x="1" y="3.5" width="4" height="1" fill="#444"/></svg>
<div class="a" style="left:668px;top:90px;width:143px;height:1px;background:#4a4a4a;"></div>
<div class="a" style="left:668px;top:91px;width:143px;height:1px;background:#5c5c5c;"></div>
<div class="a" style="left:673px;top:93px;width:11px;height:10px;background:#eeeeee;border:1px solid #222"></div>
<svg style="left:676px;top:96px;" width="5" height="4" viewBox="0 0 5 4"><ellipse cx="2.5" cy="2" rx="2.5" ry="2" fill="#222"/></svg>
<div class="t z" style="left:689px;top:95px;font-size:7px;color:#d6d6d6;">ЭЩ</div>
<div class="a" style="left:668px;top:106px;width:143px;height:1px;background:#4c4c4c;"></div>
<div class="a" style="left:675px;top:110px;width:10px;height:18px;background:#888;border:1px solid #333"></div>
<div class="a" style="left:677px;top:112px;width:6px;height:13px;background:#f4f4f4;"></div>
<div class="t z" style="left:691px;top:115px;font-size:7px;color:#cfcfcf;">ШНЛЖ</div>
<svg style="left:782px;top:114px;" width="9" height="9" viewBox="0 0 9 9"><rect x="0" y="0" width="7" height="7" fill="#eee"/><rect x="1.5" y="1.5" width="4" height="4" fill="#555"/><rect x="5" y="5" width="4" height="4" fill="#ddd" stroke="#555" stroke-width=".8"/></svg>
<svg style="left:794px;top:114px;" width="9" height="9" viewBox="0 0 9 9"><rect x="0" y="0" width="9" height="9" fill="#eee"/><rect x="2" y="2" width="5" height="5" fill="#222"/></svg>
<div class="a" style="left:668px;top:134px;width:143px;height:1px;background:#4c4c4c;"></div>
<div class="t z" style="left:675px;top:145px;font-size:7px;color:#d0d0d0;">ПБ<span style="font-weight:normal">:</span></div>
<div class="t" style="left:772px;top:145px;font-size:7px;color:#e0e0e0;filter:blur(0.2px)">100%</div>
<div class="a" style="left:675px;top:155px;width:125px;height:2px;background:#7a7a7a;"></div>
<div class="a" style="left:675px;top:157px;width:125px;height:1px;background:#444;"></div>
<svg style="left:795px;top:152px;" width="9" height="7" viewBox="0 0 9 7"><path d="M4.5 0L9 7H0z" fill="#f2f2f2"/></svg>
<div class="t z" style="left:675px;top:171px;font-size:7px;color:#d0d0d0;">ПБ<span style="font-weight:normal">:</span></div>
<div class="t" style="left:772px;top:171px;font-size:7px;color:#e0e0e0;filter:blur(0.2px)">9.0</div>
<div class="t z" style="left:784px;top:171px;font-size:7px;color:#e0e0e0;">НЛ</div>
<div class="a" style="left:675px;top:181px;width:125px;height:2px;background:#7a7a7a;"></div>
<div class="a" style="left:675px;top:183px;width:125px;height:1px;background:#444;"></div>
<svg style="left:671px;top:179px;" width="9" height="7" viewBox="0 0 9 7"><path d="M4.5 0L9 7H0z" fill="#f2f2f2"/></svg>
<div class="t z" style="left:673px;top:199px;font-size:6px;color:#8c8c8c;">ЮД</div>
<div class="a" style="left:744px;top:198px;width:59px;height:10px;background:#4c4c4c;"></div>
<div class="t z" style="left:754px;top:200px;font-size:6px;color:#9a9a9a;">НЛЖЮДЭ</div>
<div class="a" style="left:744px;top:213px;width:59px;height:10px;background:#4c4c4c;"></div>
<div class="t z" style="left:759px;top:215px;font-size:6px;color:#9a9a9a;">ЭЩПБШ</div>
<div class="a" style="left:744px;top:229px;width:59px;height:9px;background:#4c4c4c;"></div>
<div class="t z" style="left:766px;top:230px;font-size:6px;color:#9a9a9a;">ДЭ</div>
<div class="a" style="left:668px;top:250px;width:143px;height:1px;background:#4a4a4a;"></div>
<svg style="left:746px;top:254px;" width="6" height="8" viewBox="0 0 6 8"><rect x="0" y="0" width="1" height="8" fill="#aaa"/><rect x="2.5" y="0" width="1" height="8" fill="#aaa"/><rect x="5" y="0" width="1" height="8" fill="#aaa"/></svg>
<svg style="left:761px;top:254px;" width="9" height="8" viewBox="0 0 9 8"><path d="M4.5 0L9 4L4.5 8L0 4z" fill="#aaa"/></svg>
<div class="a" style="left:776px;top:251px;width:13px;height:14px;background:#333;"></div>
<svg style="left:778px;top:255px;" width="9" height="6" viewBox="0 0 9 6"><path d="M0 3Q4.5 -1.5 9 3Q4.5 7.5 0 3z" fill="#eee"/><circle cx="4.5" cy="3" r="1.6" fill="#333"/></svg>
<svg style="left:794px;top:253px;" width="7" height="9" viewBox="0 0 7 9"><rect x="0" y="1" width="7" height="8" rx="1" fill="#aaa"/></svg>
<div class="a" style="left:668px;top:268px;width:143px;height:1px;background:#333;"></div>
<div class="a" style="left:838px;top:432px;width:75px;height:95px;background:transparent;border:1.5px solid #7e4444"></div>
<svg style="left:0;top:0" width="1000" height="537" viewBox="0 0 1000 537"><g fill="#d4d4d4" opacity="0.93"><ellipse cx="848.2" cy="440.7" rx="6.2" ry="8.8"/><ellipse cx="863.8" cy="441.5" rx="5.8" ry="8.3"/><ellipse cx="835.7" cy="452.3" rx="6.3" ry="8"/><ellipse cx="873.2" cy="456.3" rx="5.8" ry="7.5"/><path d="M847 456 Q838 463 835 472 Q831 486 846 486 H866 Q879 486 876 474 Q872 462 862 456 Q854 452 847 456Z"/></g><g fill="none" stroke="#5a5a5a" stroke-width="2.4" stroke-linecap="butt"><path d="M850.5 462 V481"/><ellipse cx="846" cy="475.5" rx="4.3" ry="4.8"/><path d="M856 469 V476.5 Q856 480.5 860 480.5 Q864 480.5 864 476.5 V469 M864.5 469 V481"/></g><g fill="none" stroke="#dedede" stroke-width="2.8" stroke-linejoin="miter" opacity=".95"><path d="M891 457 L885 466.5 L892 466 L884.5 476.5 L896 474"/><path d="M884 483.5 L897 481"/><path d="M900 459 H910.5 L900.5 470 M903 463 L912 470.5"/><path d="M902 475 H911 M906.5 470 V483.5 M899.5 483.5 H913"/></g></svg>
<div class="t" style="left:829px;top:493px;font-size:20px;color:#dedede;letter-spacing:0.6px;opacity:.95">n.baidu.c_....</div>
<svg style="left:0;top:0" width="1000" height="537" viewBox="0 0 1000 537"><circle cx="998" cy="418" r="9.5" fill="#3ab54a" stroke="#e8f0e8" stroke-width="1.2"/><rect x="991" y="416" width="8" height="4" fill="#cfe8cf" opacity=".7"/><path d="M957 438 L967 435 L970 443 L959 446z" fill="#f4e6ea" stroke="#d05080" stroke-width=".8"/><path d="M960 446 Q972 444 976 458 Q979 470 972 480 L967 478 Q972 468 968 457 Q965 450 958 451z" fill="#d02a62"/><path d="M962 449 Q970 450 972 462" fill="none" stroke="#f080a8" stroke-width="1"/><path d="M970 478 Q962 488 966 500 Q969 510 966 516" fill="none" stroke="#c84a7a" stroke-width="2.2"/><path d="M973 480 Q976 495 972 505" fill="none" stroke="#d06890" stroke-width="1.5"/><path d="M963 466 L970 462 L975 470 L968 476z" fill="#f2f2f2"/><path d="M976 488 Q980 476 990 474 L997 470 L994 480 Q992 490 982 492z" fill="#f2f2f2"/><path d="M984 474 L986 468 L989 473z" fill="#f2f2f2"/><circle cx="986" cy="482" r="1" fill="#e06080"/><path d="M954 507 L959 506 L961 523 L956 523z" fill="#f6f6f6"/><ellipse cx="960.5" cy="527" rx="4.5" ry="5" fill="#e890a8"/><circle cx="985" cy="446.5" r="5.6" fill="#f2dada" stroke="#c98" stroke-width=".6"/><circle cx="991.5" cy="463.5" r="5.6" fill="#f2dada" stroke="#c98" stroke-width=".6"/><circle cx="993" cy="497" r="5.6" fill="#f2dada" stroke="#c98" stroke-width=".6"/><path d="M982 445h2M986 445h2M983 448.5q1.5 1 3 0" stroke="#a05050" stroke-width=".7" fill="none"/></svg>
</body></html>
